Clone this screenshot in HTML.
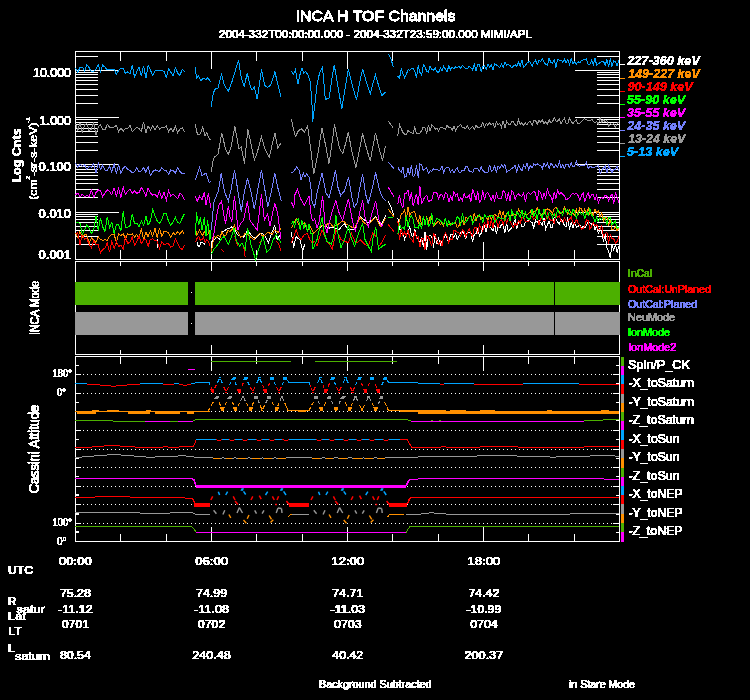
<!DOCTYPE html>
<html lang="en"><head><meta charset="utf-8"><title>INCA H TOF Channels</title>
<style>html,body{margin:0;padding:0;background:#000;overflow:hidden}svg{display:block}text{font-family:"Liberation Sans", sans-serif;white-space:pre}</style></head><body>
<svg width="750" height="700" viewBox="0 0 750 700">
<rect width="750" height="700" fill="#000"/>
<g shape-rendering="crispEdges">
<rect x="75" y="51" width="545" height="1" fill="#ffffff"/>
<rect x="75" y="259" width="545" height="1" fill="#ffffff"/>
<rect x="75" y="51" width="1" height="209" fill="#ffffff"/>
<rect x="619" y="51" width="1" height="209" fill="#ffffff"/>
<rect x="75" y="261" width="545" height="1" fill="#ffffff"/>
<rect x="75" y="354" width="545" height="1" fill="#ffffff"/>
<rect x="75" y="261" width="1" height="94" fill="#ffffff"/>
<rect x="619" y="261" width="1" height="94" fill="#ffffff"/>
<rect x="75" y="356" width="545" height="1" fill="#ffffff"/>
<rect x="75" y="541" width="545" height="1" fill="#ffffff"/>
<rect x="75" y="356" width="1" height="186" fill="#ffffff"/>
<rect x="619" y="356" width="1" height="186" fill="#ffffff"/>
<rect x="120" y="51" width="1" height="10" fill="#ffffff"/>
<rect x="120" y="250" width="1" height="10" fill="#ffffff"/>
<rect x="166" y="51" width="1" height="10" fill="#ffffff"/>
<rect x="166" y="250" width="1" height="10" fill="#ffffff"/>
<rect x="211" y="51" width="1" height="18" fill="#ffffff"/>
<rect x="211" y="242" width="1" height="18" fill="#ffffff"/>
<rect x="256" y="51" width="1" height="10" fill="#ffffff"/>
<rect x="256" y="250" width="1" height="10" fill="#ffffff"/>
<rect x="302" y="51" width="1" height="10" fill="#ffffff"/>
<rect x="302" y="250" width="1" height="10" fill="#ffffff"/>
<rect x="347" y="51" width="1" height="18" fill="#ffffff"/>
<rect x="347" y="242" width="1" height="18" fill="#ffffff"/>
<rect x="392" y="51" width="1" height="10" fill="#ffffff"/>
<rect x="392" y="250" width="1" height="10" fill="#ffffff"/>
<rect x="438" y="51" width="1" height="10" fill="#ffffff"/>
<rect x="438" y="250" width="1" height="10" fill="#ffffff"/>
<rect x="483" y="51" width="1" height="18" fill="#ffffff"/>
<rect x="483" y="242" width="1" height="18" fill="#ffffff"/>
<rect x="528" y="51" width="1" height="10" fill="#ffffff"/>
<rect x="528" y="250" width="1" height="10" fill="#ffffff"/>
<rect x="574" y="51" width="1" height="10" fill="#ffffff"/>
<rect x="574" y="250" width="1" height="10" fill="#ffffff"/>
<rect x="120" y="261" width="1" height="5" fill="#ffffff"/>
<rect x="120" y="350" width="1" height="5" fill="#ffffff"/>
<rect x="166" y="261" width="1" height="5" fill="#ffffff"/>
<rect x="166" y="350" width="1" height="5" fill="#ffffff"/>
<rect x="211" y="261" width="1" height="10" fill="#ffffff"/>
<rect x="211" y="345" width="1" height="10" fill="#ffffff"/>
<rect x="256" y="261" width="1" height="5" fill="#ffffff"/>
<rect x="256" y="350" width="1" height="5" fill="#ffffff"/>
<rect x="302" y="261" width="1" height="5" fill="#ffffff"/>
<rect x="302" y="350" width="1" height="5" fill="#ffffff"/>
<rect x="347" y="261" width="1" height="10" fill="#ffffff"/>
<rect x="347" y="345" width="1" height="10" fill="#ffffff"/>
<rect x="392" y="261" width="1" height="5" fill="#ffffff"/>
<rect x="392" y="350" width="1" height="5" fill="#ffffff"/>
<rect x="438" y="261" width="1" height="5" fill="#ffffff"/>
<rect x="438" y="350" width="1" height="5" fill="#ffffff"/>
<rect x="483" y="261" width="1" height="10" fill="#ffffff"/>
<rect x="483" y="345" width="1" height="10" fill="#ffffff"/>
<rect x="528" y="261" width="1" height="5" fill="#ffffff"/>
<rect x="528" y="350" width="1" height="5" fill="#ffffff"/>
<rect x="574" y="261" width="1" height="5" fill="#ffffff"/>
<rect x="574" y="350" width="1" height="5" fill="#ffffff"/>
<rect x="120" y="356" width="1" height="8" fill="#ffffff"/>
<rect x="120" y="534" width="1" height="8" fill="#ffffff"/>
<rect x="166" y="356" width="1" height="8" fill="#ffffff"/>
<rect x="166" y="534" width="1" height="8" fill="#ffffff"/>
<rect x="211" y="356" width="1" height="15" fill="#ffffff"/>
<rect x="211" y="527" width="1" height="15" fill="#ffffff"/>
<rect x="256" y="356" width="1" height="8" fill="#ffffff"/>
<rect x="256" y="534" width="1" height="8" fill="#ffffff"/>
<rect x="302" y="356" width="1" height="8" fill="#ffffff"/>
<rect x="302" y="534" width="1" height="8" fill="#ffffff"/>
<rect x="347" y="356" width="1" height="15" fill="#ffffff"/>
<rect x="347" y="527" width="1" height="15" fill="#ffffff"/>
<rect x="392" y="356" width="1" height="8" fill="#ffffff"/>
<rect x="392" y="534" width="1" height="8" fill="#ffffff"/>
<rect x="438" y="356" width="1" height="8" fill="#ffffff"/>
<rect x="438" y="534" width="1" height="8" fill="#ffffff"/>
<rect x="483" y="356" width="1" height="15" fill="#ffffff"/>
<rect x="483" y="527" width="1" height="15" fill="#ffffff"/>
<rect x="528" y="356" width="1" height="8" fill="#ffffff"/>
<rect x="528" y="534" width="1" height="8" fill="#ffffff"/>
<rect x="574" y="356" width="1" height="8" fill="#ffffff"/>
<rect x="574" y="534" width="1" height="8" fill="#ffffff"/>
<rect x="75" y="244" width="23" height="1" fill="#ffffff"/>
<rect x="597" y="244" width="23" height="1" fill="#ffffff"/>
<rect x="75" y="236" width="23" height="1" fill="#ffffff"/>
<rect x="597" y="236" width="23" height="1" fill="#ffffff"/>
<rect x="75" y="230" width="23" height="1" fill="#ffffff"/>
<rect x="597" y="230" width="23" height="1" fill="#ffffff"/>
<rect x="75" y="226" width="23" height="1" fill="#ffffff"/>
<rect x="597" y="226" width="23" height="1" fill="#ffffff"/>
<rect x="75" y="222" width="23" height="1" fill="#ffffff"/>
<rect x="597" y="222" width="23" height="1" fill="#ffffff"/>
<rect x="75" y="219" width="23" height="1" fill="#ffffff"/>
<rect x="597" y="219" width="23" height="1" fill="#ffffff"/>
<rect x="75" y="216" width="23" height="1" fill="#ffffff"/>
<rect x="597" y="216" width="23" height="1" fill="#ffffff"/>
<rect x="75" y="214" width="23" height="1" fill="#ffffff"/>
<rect x="597" y="214" width="23" height="1" fill="#ffffff"/>
<rect x="75" y="212" width="44" height="1" fill="#ffffff"/>
<rect x="575" y="212" width="45" height="1" fill="#ffffff"/>
<rect x="75" y="197" width="23" height="1" fill="#ffffff"/>
<rect x="597" y="197" width="23" height="1" fill="#ffffff"/>
<rect x="75" y="189" width="23" height="1" fill="#ffffff"/>
<rect x="597" y="189" width="23" height="1" fill="#ffffff"/>
<rect x="75" y="183" width="23" height="1" fill="#ffffff"/>
<rect x="597" y="183" width="23" height="1" fill="#ffffff"/>
<rect x="75" y="179" width="23" height="1" fill="#ffffff"/>
<rect x="597" y="179" width="23" height="1" fill="#ffffff"/>
<rect x="75" y="175" width="23" height="1" fill="#ffffff"/>
<rect x="597" y="175" width="23" height="1" fill="#ffffff"/>
<rect x="75" y="172" width="23" height="1" fill="#ffffff"/>
<rect x="597" y="172" width="23" height="1" fill="#ffffff"/>
<rect x="75" y="169" width="23" height="1" fill="#ffffff"/>
<rect x="597" y="169" width="23" height="1" fill="#ffffff"/>
<rect x="75" y="166" width="23" height="1" fill="#ffffff"/>
<rect x="597" y="166" width="23" height="1" fill="#ffffff"/>
<rect x="75" y="164" width="44" height="1" fill="#ffffff"/>
<rect x="575" y="164" width="45" height="1" fill="#ffffff"/>
<rect x="75" y="150" width="23" height="1" fill="#ffffff"/>
<rect x="597" y="150" width="23" height="1" fill="#ffffff"/>
<rect x="75" y="142" width="23" height="1" fill="#ffffff"/>
<rect x="597" y="142" width="23" height="1" fill="#ffffff"/>
<rect x="75" y="136" width="23" height="1" fill="#ffffff"/>
<rect x="597" y="136" width="23" height="1" fill="#ffffff"/>
<rect x="75" y="131" width="23" height="1" fill="#ffffff"/>
<rect x="597" y="131" width="23" height="1" fill="#ffffff"/>
<rect x="75" y="128" width="23" height="1" fill="#ffffff"/>
<rect x="597" y="128" width="23" height="1" fill="#ffffff"/>
<rect x="75" y="124" width="23" height="1" fill="#ffffff"/>
<rect x="597" y="124" width="23" height="1" fill="#ffffff"/>
<rect x="75" y="122" width="23" height="1" fill="#ffffff"/>
<rect x="597" y="122" width="23" height="1" fill="#ffffff"/>
<rect x="75" y="119" width="23" height="1" fill="#ffffff"/>
<rect x="597" y="119" width="23" height="1" fill="#ffffff"/>
<rect x="75" y="117" width="44" height="1" fill="#ffffff"/>
<rect x="575" y="117" width="45" height="1" fill="#ffffff"/>
<rect x="75" y="103" width="23" height="1" fill="#ffffff"/>
<rect x="597" y="103" width="23" height="1" fill="#ffffff"/>
<rect x="75" y="95" width="23" height="1" fill="#ffffff"/>
<rect x="597" y="95" width="23" height="1" fill="#ffffff"/>
<rect x="75" y="89" width="23" height="1" fill="#ffffff"/>
<rect x="597" y="89" width="23" height="1" fill="#ffffff"/>
<rect x="75" y="84" width="23" height="1" fill="#ffffff"/>
<rect x="597" y="84" width="23" height="1" fill="#ffffff"/>
<rect x="75" y="80" width="23" height="1" fill="#ffffff"/>
<rect x="597" y="80" width="23" height="1" fill="#ffffff"/>
<rect x="75" y="77" width="23" height="1" fill="#ffffff"/>
<rect x="597" y="77" width="23" height="1" fill="#ffffff"/>
<rect x="75" y="74" width="23" height="1" fill="#ffffff"/>
<rect x="597" y="74" width="23" height="1" fill="#ffffff"/>
<rect x="75" y="72" width="23" height="1" fill="#ffffff"/>
<rect x="597" y="72" width="23" height="1" fill="#ffffff"/>
<rect x="75" y="70" width="44" height="1" fill="#ffffff"/>
<rect x="575" y="70" width="45" height="1" fill="#ffffff"/>
<rect x="75" y="56" width="23" height="1" fill="#ffffff"/>
<rect x="597" y="56" width="23" height="1" fill="#ffffff"/>
<rect x="75" y="365" width="4" height="1" fill="#ffffff"/>
<rect x="75" y="383" width="4" height="1" fill="#ffffff"/>
<rect x="75" y="402" width="4" height="1" fill="#ffffff"/>
<rect x="75" y="420" width="4" height="1" fill="#ffffff"/>
<rect x="75" y="439" width="4" height="1" fill="#ffffff"/>
<rect x="75" y="457" width="4" height="1" fill="#ffffff"/>
<rect x="75" y="476" width="4" height="1" fill="#ffffff"/>
<rect x="75" y="494" width="4" height="1" fill="#ffffff"/>
<rect x="75" y="513" width="4" height="1" fill="#ffffff"/>
<rect x="75" y="531" width="4" height="1" fill="#ffffff"/>
</g>
<g>
<polyline points="157.0,238.5 157.8,247.5" fill="none" stroke="#ffffff" stroke-width="1" shape-rendering="crispEdges"/>
<polyline points="197.2,242.0 198.3,246.8 199.6,246.0 201.2,242.0 202.8,242.8 204.4,244.4 206.0,241.2" fill="none" stroke="#ffffff" stroke-width="1" shape-rendering="crispEdges"/>
<polyline points="211.3,258.8 211.3,242.0 214.0,239.6 217.2,237.2 219.6,239.6 222.0,231.6 224.4,230.8 226.8,229.2 229.2,228.4 231.9,226.8 234.8,229.2 236.4,233.2 238.0,234.8 240.9,236.4 243.6,237.2 245.7,233.2 247.6,230.0 249.2,232.4 250.8,234.8 253.2,237.2 255.6,238.8 258.0,235.6 260.4,233.2 262.8,234.0 265.2,236.4 266.8,239.6 268.4,242.8 270.0,238.0 271.6,233.2 273.2,229.2 274.8,225.2 276.1,233.2 277.2,239.6 279.0,236.4 280.9,234.0" fill="none" stroke="#ffffff" stroke-width="1" shape-rendering="crispEdges"/>
<polyline points="291.4,232.4 292.7,241.2 293.8,247.6 294.9,241.2 296.2,236.4 298.1,238.8 300.2,239.6 301.5,246.0 302.6,250.8 303.9,246.8 305.0,244.4" fill="none" stroke="#ffffff" stroke-width="1" shape-rendering="crispEdges"/>
<polyline points="319.4,228.4 322.1,225.2 324.7,226.5 326.9,226.8 329.8,228.1 333.0,227.6 336.2,228.7 339.4,229.2 341.8,226.0 344.5,223.6 346.6,227.6 349.0,230.0 352.2,229.7 355.4,228.4 357.8,222.0 360.2,216.4 362.6,218.8 365.0,220.4 368.2,222.8 372.2,219.6 375.7,216.4 378.6,222.0 381.0,225.2 383.4,220.4 385.8,215.6" fill="none" stroke="#ffffff" stroke-width="1" shape-rendering="crispEdges"/>
<polyline points="388.2,201.2 390.6,206.0 393.8,215.6" fill="none" stroke="#ffffff" stroke-width="1" shape-rendering="crispEdges"/>
<polyline points="397.8,217.8 399.5,227.7 401.2,233.7 402.9,232.4 404.6,239.2 406.3,235.0 408.0,231.7 409.7,226.7 411.4,235.2 413.1,237.0 414.8,229.3 416.5,237.3 418.2,239.4 419.9,242.5 421.6,237.1 423.3,247.1 425.0,232.2 426.7,249.5 428.4,236.4 430.1,235.1 431.8,236.5 433.5,247.6 435.2,233.8 436.9,243.9 438.6,238.2 440.3,244.9 442.0,241.6 443.7,239.1 445.4,234.7 447.1,237.6 448.8,243.1 450.5,234.5 452.2,234.8 453.9,237.3 455.6,233.8 457.3,239.6 459.0,235.8 460.7,232.8 462.4,231.3 464.1,234.4 465.8,238.4 467.5,231.5 469.2,232.8 470.9,232.3 472.6,241.8 474.3,234.2 476.0,233.8 477.7,229.1 479.4,235.8 481.1,233.3 482.8,226.9 484.5,225.9 486.2,232.4 487.9,222.3 489.6,226.2 491.3,228.7 493.0,231.0 494.7,224.7 496.4,234.1 498.1,226.4 499.8,227.8 501.5,224.6 503.2,225.1 504.9,232.8 506.6,222.3 508.3,231.9 510.0,229.3 511.7,228.3 513.4,223.7 515.1,219.4 516.8,229.1 518.5,221.9 520.2,221.4 521.9,227.0 523.6,226.6 525.3,222.6 527.0,221.5 528.7,220.2 530.4,221.3 532.1,222.6 533.8,228.1 535.5,220.2 537.2,222.6 538.9,220.3 540.6,222.5 542.3,225.2 544.0,217.8 545.7,229.1 547.4,224.7 549.1,221.1 550.8,227.1 552.5,227.4 554.2,217.0 555.9,218.9 557.6,222.0 559.3,224.1 561.0,219.8 562.7,220.5 564.4,225.7 566.1,226.2 567.8,216.9 569.5,229.7 571.2,221.8 572.9,227.8 574.6,222.8 576.3,227.1 578.0,226.4 579.7,224.9 581.4,228.2 583.1,226.6 584.8,227.8 586.5,225.6 588.2,221.4 589.9,222.8 591.6,224.0 593.3,223.7 595.0,229.4 596.7,226.3 598.4,234.2 600.1,227.8 601.8,232.6 603.5,241.7 605.2,234.0 606.9,247.7 608.6,251.3 610.3,257.7 612.0,245.2 613.7,250.1 615.4,244.4 617.1,252.5 618.8,245.9" fill="none" stroke="#ffffff" stroke-width="1" shape-rendering="crispEdges"/>
<polyline points="75.5,233.1 77.8,237.1 80.0,231.6 82.3,237.3 84.6,234.9 86.8,235.0 89.1,243.4 91.4,237.9 93.7,240.0 95.9,242.6 98.2,236.8 100.5,239.6 102.7,240.4 105.0,239.6 107.3,240.3 109.5,236.4 111.8,234.3 114.1,234.4 116.4,242.1 118.6,233.5 120.9,235.7 123.2,233.6 125.4,238.7 127.7,233.9 130.0,235.0 132.2,233.9 134.5,236.9 136.8,234.4 139.1,238.4 141.3,228.5 143.6,240.0 145.9,232.3 148.1,236.9 150.4,230.6 152.7,236.4 155.0,228.3 157.2,237.9 159.5,227.9 161.8,236.5 164.0,231.4 166.3,231.7 168.6,233.1 170.8,237.3 173.1,232.7 175.4,234.7 177.7,231.5 179.9,234.3 182.2,230.8 184.5,234.5" fill="none" stroke="#ff9000" stroke-width="1" shape-rendering="crispEdges"/>
<polyline points="195.6,228.4 196.7,234.8 198.0,233.2 199.6,230.0 201.2,233.2 202.8,235.6 204.4,231.6 206.0,234.0 207.6,234.8 209.2,230.8 210.8,233.2" fill="none" stroke="#ff9000" stroke-width="1" shape-rendering="crispEdges"/>
<polyline points="211.3,252.4 214.0,236.4 215.9,238.0 218.0,234.8 220.1,237.2 222.0,231.6 223.9,236.4 226.0,234.8 228.1,230.0 230.0,231.6 232.2,229.2 234.5,225.2 236.4,230.8 238.0,231.6 240.4,237.2 242.8,236.4 245.2,233.2 247.6,234.8 250.8,237.2 254.0,239.6 257.2,235.6 260.4,233.2 262.8,236.4 265.2,234.8 267.6,232.4 270.0,233.2 272.4,234.0 274.8,230.0 278.0,232.4 280.9,228.4" fill="none" stroke="#ff9000" stroke-width="1" shape-rendering="crispEdges"/>
<polyline points="291.4,228.4 293.8,222.8 296.2,218.8 298.6,224.4 301.0,225.2 304.2,222.8 307.4,230.0 310.6,226.8 313.8,233.2 317.0,230.0 319.4,227.6 322.1,225.2 324.7,226.8 326.9,224.4 329.8,222.8 333.0,226.8 336.2,225.2 339.4,223.6 341.8,221.2 344.5,222.0 346.6,224.4 349.0,225.2 352.2,227.6 355.4,226.8 357.8,222.0 360.2,217.2 362.6,221.2 365.0,223.6 368.2,225.2 372.2,220.4 375.7,217.2 378.6,223.6 381.0,226.8 383.4,222.0 385.8,218.0" fill="none" stroke="#ff9000" stroke-width="1" shape-rendering="crispEdges"/>
<polyline points="388.2,209.2 393.8,216.4" fill="none" stroke="#ff9000" stroke-width="1" shape-rendering="crispEdges"/>
<polyline points="397.8,222.7 399.5,221.4 401.2,213.9 402.9,213.1 404.6,209.8 406.3,220.5 408.0,207.1 409.7,215.7 411.4,212.6 413.1,211.8 414.8,211.8 416.5,218.7 418.2,222.8 419.9,215.6 421.6,225.1 423.3,216.4 425.0,223.5 426.7,217.0 428.4,223.0 430.1,216.3 431.8,218.9 433.5,226.4 435.2,224.5 436.9,222.6 438.6,221.3 440.3,224.9 442.0,222.5 443.7,225.9 445.4,217.8 447.1,225.7 448.8,224.4 450.5,223.7 452.2,225.0 453.9,222.9 455.6,222.2 457.3,227.9 459.0,225.5 460.7,222.3 462.4,220.5 464.1,224.7 465.8,217.7 467.5,218.2 469.2,216.8 470.9,215.3 472.6,221.2 474.3,213.0 476.0,221.1 477.7,215.3 479.4,215.7 481.1,220.1 482.8,217.6 484.5,216.8 486.2,217.0 487.9,220.2 489.6,215.9 491.3,219.2 493.0,215.5 494.7,214.4 496.4,215.8 498.1,216.8 499.8,210.7 501.5,217.2 503.2,210.9 504.9,218.7 506.6,213.7 508.3,214.1 510.0,216.6 511.7,215.6 513.4,214.5 515.1,214.2 516.8,215.2 518.5,208.9 520.2,212.1 521.9,213.2 523.6,213.8 525.3,214.8 527.0,214.9 528.7,213.3 530.4,211.3 532.1,214.5 533.8,211.4 535.5,211.5 537.2,208.0 538.9,212.2 540.6,215.0 542.3,213.8 544.0,214.3 545.7,209.9 547.4,208.9 549.1,209.8 550.8,211.3 552.5,213.9 554.2,208.3 555.9,207.5 557.6,209.9 559.3,211.6 561.0,213.5 562.7,211.7 564.4,207.1 566.1,209.8 567.8,214.0 569.5,210.0 571.2,213.7 572.9,213.1 574.6,215.6 576.3,209.4 578.0,214.6 579.7,207.7 581.4,209.0 583.1,213.1 584.8,208.8 586.5,215.2 588.2,208.2 589.9,214.4 591.6,212.3 593.3,214.8 595.0,209.1 596.7,213.1 598.4,210.7 600.1,217.1 601.8,212.7 603.5,220.7 605.2,218.0 606.9,217.0 608.6,225.5 610.3,218.7 612.0,229.7 613.7,229.1 615.4,226.8 617.1,230.6 618.8,228.5" fill="none" stroke="#ff9000" stroke-width="1" shape-rendering="crispEdges"/>
<polyline points="75.5,234.2 77.8,232.8 80.0,244.8 82.3,234.2 84.6,239.0 86.8,238.1 89.1,244.4 91.4,247.7 93.7,241.0 95.9,244.2 98.2,244.9 100.5,252.7 102.7,249.6 105.0,248.0 107.3,242.9 109.5,252.3 111.8,241.4 114.1,248.7 116.4,241.4 118.6,246.7 120.9,245.2 123.2,249.0 125.4,237.2 127.7,243.4 130.0,242.2 132.2,237.2 134.5,245.1 136.8,241.9 139.1,235.6 141.3,243.7 143.6,239.9 145.9,239.4 148.1,246.5 150.4,239.1 152.7,239.0 155.0,240.6 157.2,241.1 159.5,248.2 161.8,241.4 164.0,244.8 166.3,243.7 168.6,243.8 170.8,247.1 173.1,246.1 175.4,239.2 177.7,243.4 179.9,247.7 182.2,249.4 184.5,244.7" fill="none" stroke="#ff0000" stroke-width="1" shape-rendering="crispEdges"/>
<polyline points="195.6,242.0 197.2,238.0 198.8,236.4 200.4,240.4 202.0,239.6 203.6,237.2 205.2,242.8 206.8,239.6 208.4,241.2 210.0,246.0" fill="none" stroke="#ff0000" stroke-width="1" shape-rendering="crispEdges"/>
<polyline points="221.2,249.2 224.4,252.4" fill="none" stroke="#ff0000" stroke-width="1" shape-rendering="crispEdges"/>
<polyline points="234.8,236.4 236.4,242.0 238.0,246.0" fill="none" stroke="#ff0000" stroke-width="1" shape-rendering="crispEdges"/>
<polyline points="243.6,246.0 244.4,252.4 245.2,257.2" fill="none" stroke="#ff0000" stroke-width="1" shape-rendering="crispEdges"/>
<polyline points="258.8,242.8 260.4,242.0 262.0,239.6" fill="none" stroke="#ff0000" stroke-width="1" shape-rendering="crispEdges"/>
<polyline points="276.4,241.2 278.8,244.4 280.9,250.8" fill="none" stroke="#ff0000" stroke-width="1" shape-rendering="crispEdges"/>
<polyline points="291.4,242.8 293.8,236.4 296.2,230.0 298.6,236.4 301.0,239.6 304.2,234.8 307.4,233.2 309.8,239.6 312.2,242.8 314.6,241.2 317.0,246.0 319.4,238.0 322.1,230.0 324.7,236.4 326.9,241.2 329.8,244.4 332.2,249.2 334.3,239.6 335.9,230.0 338.6,234.8 341.0,239.6 344.5,241.2 348.5,242.8 351.4,233.2 353.5,238.0 355.4,242.8 357.8,242.0 360.2,239.6 362.6,242.0 365.0,244.4 368.2,246.0 370.6,239.6 372.7,233.2 375.7,236.4" fill="none" stroke="#ff0000" stroke-width="1" shape-rendering="crispEdges"/>
<polyline points="379.4,246.0 382.6,241.2 385.8,234.8" fill="none" stroke="#ff0000" stroke-width="1" shape-rendering="crispEdges"/>
<polyline points="388.2,224.4 393.8,231.6" fill="none" stroke="#ff0000" stroke-width="1" shape-rendering="crispEdges"/>
<polyline points="397.8,221.0 399.5,240.3 401.2,228.9 402.9,235.6 404.6,232.4 406.3,235.7 408.0,230.1 409.7,237.5 411.4,239.3 413.1,242.1 414.8,231.4 416.5,238.3 418.2,237.2 419.9,247.3 421.6,238.6 423.3,238.7 425.0,249.5 426.7,235.6 428.4,237.0 430.1,241.2 431.8,245.7 433.5,234.1 435.2,235.9 436.9,240.5 438.6,244.2 440.3,241.2 442.0,245.6 443.7,236.3 445.4,233.2 447.1,236.2 448.8,242.6 450.5,239.0 452.2,239.8 453.9,230.6 455.6,231.0 457.3,232.5 459.0,233.1 460.7,236.5 462.4,229.3 464.1,231.6 465.8,237.0 467.5,232.4 469.2,228.8 470.9,234.0 472.6,236.4 474.3,227.8 476.0,227.3 477.7,234.2 479.4,224.4 481.1,228.2 482.8,231.3 484.5,221.7 486.2,228.1 487.9,220.4 489.6,228.0 491.3,219.7 493.0,227.6 494.7,217.8 496.4,220.8 498.1,227.4 499.8,221.5 501.5,219.0 503.2,224.9 504.9,218.8 506.6,222.7 508.3,218.2 510.0,220.6 511.7,224.1 513.4,227.1 515.1,223.3 516.8,225.4 518.5,221.1 520.2,223.0 521.9,217.8 523.6,217.2 525.3,221.8 527.0,221.2 528.7,221.9 530.4,217.5 532.1,216.3 533.8,219.6 535.5,217.1 537.2,215.9 538.9,224.9 540.6,218.5 542.3,218.9 544.0,220.9 545.7,220.8 547.4,213.2 549.1,218.1 550.8,220.5 552.5,219.9 554.2,223.0 555.9,214.9 557.6,217.3 559.3,215.8 561.0,220.5 562.7,222.9 564.4,217.7 566.1,221.4 567.8,221.1 569.5,219.0 571.2,217.0 572.9,222.9 574.6,224.6 576.3,218.8 578.0,222.7 579.7,225.3 581.4,229.3 583.1,228.3 584.8,225.3 586.5,220.0 588.2,220.8 589.9,229.4 591.6,226.3 593.3,222.4 595.0,226.0 596.7,224.5 598.4,230.0 600.1,229.5 601.8,225.5 603.5,237.0 605.2,233.4 606.9,232.3 608.6,243.8 610.3,234.4 612.0,238.9 613.7,238.7 615.4,243.4 617.1,241.5 618.8,236.3" fill="none" stroke="#ff0000" stroke-width="1" shape-rendering="crispEdges"/>
<polyline points="75.5,221.7 77.8,222.5 80.0,223.2 82.3,234.5 84.6,229.6 86.8,225.0 89.1,227.9 91.4,233.4 93.7,230.4 95.9,215.8 98.2,230.6 100.5,217.8 102.7,227.0 105.0,231.5 107.3,216.6 109.5,227.8 111.8,222.3 114.1,233.4 116.4,224.8 118.6,224.8 120.9,230.9 123.2,210.9 125.4,227.0 127.7,227.5 130.0,225.6 132.2,213.7 134.5,223.6 136.8,223.3 139.1,226.5 141.3,220.9 143.6,225.5 145.9,215.9 148.1,225.1 150.4,220.8 152.7,209.4 155.0,216.1 157.2,221.0 159.5,223.2 161.8,220.0 164.0,212.9 166.3,213.8 168.6,221.5 170.8,225.1 173.1,222.0 175.4,217.3 177.7,222.9 179.9,223.1 182.2,218.2 184.5,213.6" fill="none" stroke="#00ff00" stroke-width="1" shape-rendering="crispEdges"/>
<polyline points="195.6,234.8 196.4,212.4 198.8,225.2 200.4,217.2 202.0,230.0 204.4,217.2 206.0,236.4 207.6,220.4 210.0,239.6 211.0,230.0" fill="none" stroke="#00ff00" stroke-width="1" shape-rendering="crispEdges"/>
<polyline points="211.3,254.0 214.0,249.2 218.0,244.4 222.0,238.0 224.4,236.4 228.4,244.4 231.6,236.4 234.0,228.4 236.4,241.2 239.6,246.0 242.0,242.8 245.2,249.2 247.6,228.4 250.8,244.4 255.6,259.6 259.6,246.0 262.8,236.4 266.8,252.4 270.0,249.2 273.2,239.6 276.4,234.8 280.9,242.8" fill="none" stroke="#00ff00" stroke-width="1" shape-rendering="crispEdges"/>
<polyline points="291.4,223.6 293.0,221.2 294.6,226.8 296.5,219.6 298.6,218.8 300.2,230.0 301.8,220.4 303.9,228.4 305.5,222.8 307.4,231.6 309.0,223.6 310.6,233.2 312.2,233.2 313.0,249.2 317.0,239.6 322.1,217.2 324.2,233.2 326.9,241.2 331.4,244.4 333.8,236.4 335.9,214.8 337.8,233.2 341.0,247.6 344.5,239.6 348.5,225.2 350.6,236.4 354.6,246.0 358.6,233.2 362.6,223.6 365.0,239.6 368.2,246.0 371.4,251.6 372.7,239.6 375.7,226.8 378.6,249.2 382.6,246.0 385.8,244.4" fill="none" stroke="#00ff00" stroke-width="1" shape-rendering="crispEdges"/>
<polyline points="388.2,217.5 393.0,217.5" fill="none" stroke="#00ff00" stroke-width="1" shape-rendering="crispEdges"/>
<polyline points="397.8,234.1 399.5,222.9 401.2,229.0 402.9,227.4 404.6,229.1 406.3,215.0 408.0,226.6 409.7,218.3 411.4,215.8 413.1,219.1 414.8,227.5 416.5,227.2 418.2,227.9 419.9,222.8 421.6,228.6 423.3,216.4 425.0,224.7 426.7,216.9 428.4,226.7 430.1,224.0 431.8,213.5 433.5,226.3 435.2,221.2 436.9,218.4 438.6,219.1 440.3,220.9 442.0,221.7 443.7,224.7 445.4,217.8 447.1,226.4 448.8,220.4 450.5,225.2 452.2,222.8 453.9,223.9 455.6,221.2 457.3,216.9 459.0,218.3 460.7,225.7 462.4,213.1 464.1,222.3 465.8,222.6 467.5,219.8 469.2,216.5 470.9,215.9 472.6,223.6 474.3,220.8 476.0,217.3 477.7,217.1 479.4,215.1 481.1,217.2 482.8,223.1 484.5,214.5 486.2,217.3 487.9,216.3 489.6,217.0 491.3,215.2 493.0,216.4 494.7,222.3 496.4,219.5 498.1,217.4 499.8,217.9 501.5,218.7 503.2,218.0 504.9,220.7 506.6,215.1 508.3,212.0 510.0,221.1 511.7,210.3 513.4,214.4 515.1,219.1 516.8,212.0 518.5,214.3 520.2,217.4 521.9,210.0 523.6,219.1 525.3,211.6 527.0,217.4 528.7,219.4 530.4,218.6 532.1,208.8 533.8,216.4 535.5,211.3 537.2,219.5 538.9,209.2 540.6,214.3 542.3,218.7 544.0,208.6 545.7,213.9 547.4,217.9 549.1,212.5 550.8,213.5 552.5,217.4 554.2,213.8 555.9,217.7 557.6,209.7 559.3,213.4 561.0,212.5 562.7,215.1 564.4,209.0 566.1,212.3 567.8,209.1 569.5,214.1 571.2,215.2 572.9,209.6 574.6,211.2 576.3,217.8 578.0,213.7 579.7,211.3 581.4,214.8 583.1,212.8 584.8,219.2 586.5,211.6 588.2,214.9 589.9,208.8 591.6,214.9 593.3,217.4 595.0,221.6 596.7,217.1 598.4,221.5 600.1,218.1 601.8,219.4 603.5,217.6 605.2,218.2 606.9,224.3 608.6,217.6 610.3,217.1 612.0,224.5 613.7,222.7 615.4,221.0 617.1,228.6 618.8,226.9" fill="none" stroke="#00ff00" stroke-width="1" shape-rendering="crispEdges"/>
<polyline points="75.5,194.6 77.8,193.1 80.0,196.8 82.3,194.4 84.6,196.7 86.8,195.6 89.1,196.3 91.4,190.0 93.7,197.4 95.9,192.8 98.2,189.9 100.5,190.8 102.7,196.8 105.0,192.8 107.3,189.8 109.5,191.2 111.8,195.0 114.1,187.9 116.4,196.0 118.6,188.3 120.9,197.4 123.2,187.1 125.4,194.3 127.7,191.3 130.0,188.9 132.2,193.6 134.5,190.9 136.8,193.1 139.1,192.8 141.3,187.3 143.6,191.0 145.9,196.4 148.1,187.9 150.4,192.8 152.7,195.1 155.0,194.0 157.2,197.0 159.5,191.0 161.8,198.4 164.0,192.4 166.3,200.3 168.6,190.6 170.8,196.4 173.1,194.3 175.4,196.2 177.7,198.6 179.9,193.4 182.2,194.9 184.5,200.4" fill="none" stroke="#ff00ff" stroke-width="1" shape-rendering="crispEdges"/>
<polyline points="195.6,196.4 197.2,201.2 199.6,196.4 202.0,199.6 204.4,192.4 206.0,205.2 208.4,193.2 210.8,207.6" fill="none" stroke="#ff00ff" stroke-width="1" shape-rendering="crispEdges"/>
<polyline points="212.4,239.6 214.0,233.2 216.4,217.2 218.8,205.2 221.5,201.2 223.6,214.0 225.5,223.6 228.4,206.0 230.0,217.2 231.9,221.2 234.5,195.6 236.4,214.0 238.0,230.0 240.4,223.6 243.6,220.4 247.3,201.2 250.0,220.4 254.0,226.0 257.2,230.0 261.5,194.0 264.4,220.4 267.6,214.0 270.0,226.0 274.8,202.8 277.7,214.0 280.9,238.8" fill="none" stroke="#ff00ff" stroke-width="1" shape-rendering="crispEdges"/>
<polyline points="291.4,202.0 293.8,207.6 294.9,194.8 297.5,189.2 300.2,198.0 304.2,205.2 309.0,196.4 311.4,217.2 313.0,221.2 314.6,218.8 317.0,228.4 319.4,220.4 322.6,195.6 325.0,223.6 326.9,233.2 331.4,214.0 335.9,200.4 339.4,214.0 342.6,220.4 345.0,210.8 348.5,198.8 351.4,215.6 354.1,228.4 355.4,230.8 359.4,214.0 362.6,200.4 365.0,217.2 368.2,226.8 372.2,212.4 375.7,201.2 378.6,218.8 381.8,226.8 383.4,223.6" fill="none" stroke="#ff00ff" stroke-width="1" shape-rendering="crispEdges"/>
<polyline points="388.2,187.1 393.8,196.4" fill="none" stroke="#ff00ff" stroke-width="1" shape-rendering="crispEdges"/>
<polyline points="397.8,203.7 399.5,194.8 401.2,204.0 402.9,207.5 404.6,194.0 406.3,193.2 408.0,189.8 409.7,200.9 411.4,191.6 413.1,205.6 414.8,200.1 416.5,193.7 418.2,204.8 419.9,185.7 421.6,204.4 423.3,199.9 425.0,196.8 426.7,195.2 428.4,201.6 430.1,200.6 431.8,199.9 433.5,192.9 435.2,192.6 436.9,193.1 438.6,198.9 440.3,194.9 442.0,194.6 443.7,198.7 445.4,192.9 447.1,193.9 448.8,202.3 450.5,196.1 452.2,200.3 453.9,191.6 455.6,195.7 457.3,193.8 459.0,201.1 460.7,197.3 462.4,200.7 464.1,193.2 465.8,197.8 467.5,197.1 469.2,195.3 470.9,201.9 472.6,189.0 474.3,193.9 476.0,200.0 477.7,191.1 479.4,202.6 481.1,200.1 482.8,190.5 484.5,199.4 486.2,193.3 487.9,192.9 489.6,196.5 491.3,200.2 493.0,195.5 494.7,200.7 496.4,193.3 498.1,198.0 499.8,198.6 501.5,198.6 503.2,190.5 504.9,192.3 506.6,200.9 508.3,192.2 510.0,200.9 511.7,190.9 513.4,192.7 515.1,199.6 516.8,195.1 518.5,193.8 520.2,195.7 521.9,196.5 523.6,192.8 525.3,201.8 527.0,194.2 528.7,192.3 530.4,194.8 532.1,193.0 533.8,191.5 535.5,193.2 537.2,201.1 538.9,191.0 540.6,192.5 542.3,199.6 544.0,193.1 545.7,197.7 547.4,189.2 549.1,194.2 550.8,196.5 552.5,201.3 554.2,191.9 555.9,198.6 557.6,190.4 559.3,194.5 561.0,192.0 562.7,194.6 564.4,195.6 566.1,199.9 567.8,198.8 569.5,197.9 571.2,194.4 572.9,193.8 574.6,194.3 576.3,193.1 578.0,195.4 579.7,200.4 581.4,195.6 583.1,192.8 584.8,202.2 586.5,196.3 588.2,192.8 589.9,198.5 591.6,194.2 593.3,194.6 595.0,200.1 596.7,195.3 598.4,203.1 600.1,198.4 601.8,197.5 603.5,198.8 605.2,195.2 606.9,196.3 608.6,200.6 610.3,196.0 612.0,194.4 613.7,204.4 615.4,192.7 617.1,197.1 618.8,202.6" fill="none" stroke="#ff00ff" stroke-width="1" shape-rendering="crispEdges"/>
<polyline points="75.5,163.0 77.8,167.6 80.0,163.7 82.3,166.5 84.6,164.7 86.8,169.5 89.1,166.4 91.4,167.2 93.7,163.2 95.9,173.0 98.2,162.9 100.5,169.4 102.7,165.2 105.0,170.2 107.3,170.6 109.5,166.2 111.8,172.1 114.1,163.5 116.4,174.1 118.6,164.3 120.9,173.0 123.2,168.2 125.4,166.4 127.7,169.6 130.0,170.4 132.2,172.5 134.5,171.9 136.8,167.3 139.1,172.1 141.3,170.9 143.6,167.5 145.9,172.3 148.1,166.4 150.4,175.4 152.7,171.7 155.0,169.8 157.2,170.9 159.5,171.4 161.8,167.9 164.0,170.0 166.3,170.7 168.6,174.2 170.8,170.0 173.1,170.7 175.4,172.9 177.7,167.7 179.9,171.2 182.2,173.6 184.5,173.0" fill="none" stroke="#7480fc" stroke-width="1" shape-rendering="crispEdges"/>
<polyline points="195.6,179.6 199.6,167.6 202.0,175.6 206.0,173.2 209.2,182.8 210.8,181.2" fill="none" stroke="#7480fc" stroke-width="1" shape-rendering="crispEdges"/>
<polyline points="211.3,230.0 213.7,202.8 216.4,195.6 218.5,190.8 221.2,173.2 224.4,191.6 228.4,201.2 231.3,188.4 234.5,170.0 238.0,191.6 241.2,211.6 244.4,191.6 247.6,178.0 251.6,194.8 254.3,209.2 258.0,188.4 261.5,170.0 265.2,191.6 267.9,206.8 271.6,190.0 274.8,173.2 278.0,188.4 281.2,200.9" fill="none" stroke="#7480fc" stroke-width="1" shape-rendering="crispEdges"/>
<polyline points="291.4,172.4 293.8,171.6 296.5,166.8 299.4,170.8 301.0,179.6 303.4,173.2 305.0,177.2 306.6,174.0 309.0,177.2 310.6,184.4 312.2,202.8 314.6,206.8 317.0,193.2 322.1,173.2 325.8,192.4 329.0,198.0 333.0,182.0 335.4,170.0 337.8,186.8 340.7,195.6 344.5,190.8 348.5,177.2 351.4,194.8 354.1,207.6 357.0,202.8 362.6,174.0 365.8,194.8 368.2,203.6 372.2,188.4 375.7,172.4 379.4,190.0 382.6,197.2 385.8,201.2" fill="none" stroke="#7480fc" stroke-width="1" shape-rendering="crispEdges"/>
<polyline points="388.2,162.0 393.8,168.4" fill="none" stroke="#7480fc" stroke-width="1" shape-rendering="crispEdges"/>
<polyline points="397.8,166.8 399.5,170.7 401.2,172.3 402.9,166.9 404.6,177.1 406.3,176.1 408.0,168.4 409.7,175.3 411.4,164.9 413.1,176.7 414.8,175.5 416.5,165.5 418.2,177.7 419.9,163.9 421.6,164.9 423.3,170.4 425.0,168.8 426.7,167.7 428.4,173.5 430.1,170.7 431.8,171.3 433.5,168.8 435.2,169.9 436.9,169.6 438.6,170.3 440.3,169.9 442.0,165.7 443.7,173.0 445.4,168.2 447.1,167.1 448.8,167.0 450.5,172.1 452.2,169.6 453.9,172.8 455.6,169.6 457.3,167.9 459.0,172.0 460.7,172.1 462.4,170.1 464.1,170.8 465.8,166.7 467.5,166.7 469.2,170.9 470.9,171.4 472.6,172.7 474.3,168.4 476.0,168.3 477.7,168.1 479.4,171.3 481.1,166.8 482.8,170.4 484.5,172.1 486.2,172.3 487.9,172.1 489.6,164.7 491.3,171.5 493.0,170.4 494.7,165.6 496.4,172.8 498.1,165.8 499.8,168.7 501.5,164.7 503.2,167.3 504.9,164.3 506.6,171.9 508.3,170.9 510.0,170.3 511.7,168.2 513.4,167.8 515.1,165.4 516.8,171.8 518.5,165.4 520.2,168.0 521.9,171.0 523.6,165.1 525.3,167.8 527.0,163.4 528.7,169.5 530.4,165.6 532.1,168.2 533.8,163.8 535.5,165.1 537.2,163.9 538.9,165.0 540.6,165.4 542.3,168.9 544.0,163.2 545.7,166.6 547.4,163.2 549.1,168.5 550.8,163.5 552.5,164.7 554.2,167.9 555.9,164.6 557.6,167.6 559.3,161.6 561.0,168.0 562.7,165.0 564.4,168.3 566.1,164.0 567.8,164.2 569.5,167.3 571.2,162.7 572.9,167.0 574.6,166.6 576.3,160.8 578.0,165.9 579.7,166.1 581.4,165.3 583.1,165.7 584.8,165.3 586.5,162.0 588.2,168.7 589.9,166.2 591.6,167.0 593.3,167.9 595.0,166.9 596.7,166.3 598.4,165.3 600.1,173.7 601.8,170.5 603.5,167.9 605.2,166.0 606.9,173.3 608.6,165.5 610.3,169.2 612.0,172.5 613.7,169.2 615.4,169.2 617.1,165.9 618.8,171.1" fill="none" stroke="#7480fc" stroke-width="1" shape-rendering="crispEdges"/>
<polyline points="75.5,123.8 77.8,130.5 80.0,122.8 82.3,132.9 84.6,124.8 86.8,123.6 89.1,130.8 91.4,129.0 93.7,122.7 95.9,135.3 98.2,126.9 100.5,125.0 102.7,129.1 105.0,130.1 107.3,124.3 109.5,127.1 111.8,127.9 114.1,126.8 116.4,125.4 118.6,131.7 120.9,128.0 123.2,131.2 125.4,128.2 127.7,128.6 130.0,125.4 132.2,131.7 134.5,129.2 136.8,127.1 139.1,128.5 141.3,131.4 143.6,122.0 145.9,132.9 148.1,126.0 150.4,129.9 152.7,125.8 155.0,130.1 157.2,125.5 159.5,129.0 161.8,127.2 164.0,127.9 166.3,126.0 168.6,131.7 170.8,128.3 173.1,131.5 175.4,126.6 177.7,132.8 179.9,129.2 182.2,127.7 184.5,131.8" fill="none" stroke="#999999" stroke-width="1" shape-rendering="crispEdges"/>
<polyline points="195.2,124.2 197.5,134.8 200.3,133.9 202.7,127.3 204.9,135.7 206.8,132.9 208.7,137.6 210.5,140.4" fill="none" stroke="#999999" stroke-width="1" shape-rendering="crispEdges"/>
<polyline points="211.1,172.1 212.8,161.9 214.3,157.2 218.0,154.4 221.7,132.9 225.5,148.8 228.3,154.4 231.1,146.9 234.8,126.4 237.6,141.3 238.9,148.8 241.3,146.9 244.5,163.7 247.9,129.2 251.6,146.9 254.4,160.0 257.2,152.5 261.5,136.7 264.7,148.8 269.3,157.2 274.9,132.9 277.7,147.9 280.9,143.2" fill="none" stroke="#999999" stroke-width="1" shape-rendering="crispEdges"/>
<polyline points="291.4,118.9 293.3,128.0 295.4,136.6 298.5,130.5 301.5,129.0 304.6,132.0 307.6,125.9 310.7,148.8 313.7,173.9 317.7,154.9 322.0,128.0 326.0,147.3 329.0,163.5 332.1,142.7 334.5,124.4 337.3,138.1 339.7,148.8 342.8,153.4 345.8,142.7 348.3,132.0 351.9,151.9 355.9,167.8 359.3,150.4 362.6,133.5 366.6,148.8 370.3,161.0 373.0,145.8 375.5,132.9 378.8,147.3 382.5,160.4 385.5,145.8" fill="none" stroke="#999999" stroke-width="1" shape-rendering="crispEdges"/>
<polyline points="388.6,121.3 393.2,128.0" fill="none" stroke="#999999" stroke-width="1" shape-rendering="crispEdges"/>
<polyline points="397.8,135.8 399.5,124.6 401.2,128.5 402.9,132.6 404.6,134.1 406.3,134.4 408.0,130.5 409.7,132.0 411.4,132.8 413.1,133.2 414.8,127.3 416.5,133.7 418.2,133.1 419.9,133.3 421.6,130.6 423.3,127.0 425.0,128.1 426.7,133.3 428.4,125.3 430.1,131.1 431.8,125.0 433.5,126.1 435.2,129.3 436.9,127.9 438.6,131.4 440.3,127.0 442.0,127.3 443.7,128.7 445.4,129.1 447.1,125.2 448.8,127.6 450.5,127.3 452.2,130.7 453.9,126.1 455.6,130.4 457.3,127.1 459.0,126.3 460.7,124.5 462.4,127.9 464.1,127.8 465.8,128.6 467.5,125.8 469.2,129.5 470.9,128.2 472.6,126.3 474.3,129.5 476.0,125.4 477.7,127.2 479.4,127.6 481.1,126.3 482.8,122.6 484.5,127.1 486.2,123.2 487.9,125.5 489.6,122.4 491.3,124.8 493.0,123.3 494.7,127.6 496.4,122.1 498.1,125.0 499.8,123.5 501.5,127.3 503.2,120.8 504.9,128.2 506.6,121.3 508.3,123.7 510.0,125.2 511.7,121.8 513.4,121.7 515.1,124.8 516.8,125.5 518.5,119.9 520.2,124.7 521.9,122.5 523.6,125.4 525.3,123.0 527.0,124.7 528.7,122.2 530.4,121.3 532.1,125.4 533.8,120.6 535.5,120.1 537.2,124.7 538.9,120.2 540.6,121.9 542.3,119.9 544.0,123.8 545.7,121.9 547.4,123.9 549.1,119.8 550.8,122.9 552.5,121.6 554.2,117.7 555.9,121.0 557.6,121.2 559.3,118.8 561.0,123.8 562.7,120.7 564.4,118.1 566.1,122.9 567.8,123.9 569.5,117.8 571.2,121.8 572.9,123.6 574.6,121.4 576.3,120.0 578.0,124.2 579.7,123.1 581.4,121.8 583.1,119.7 584.8,118.7 586.5,119.8 588.2,120.3 589.9,121.1 591.6,119.2 593.3,121.1 595.0,123.3 596.7,121.1 598.4,124.2 600.1,117.8 601.8,122.6 603.5,119.7 605.2,122.0 606.9,120.4 608.6,126.2 610.3,123.4 612.0,124.7 613.7,123.4 615.4,127.4 617.1,123.7 618.8,121.8" fill="none" stroke="#999999" stroke-width="1" shape-rendering="crispEdges"/>
<polyline points="75.5,68.4 77.8,72.6 80.0,67.0 82.3,67.1 84.6,70.8 86.8,64.5 89.1,67.7 91.4,72.0 93.7,71.5 95.9,69.0 98.2,64.6 100.5,71.6 102.7,65.3 105.0,67.2 107.3,69.9 109.5,69.4 111.8,69.6 114.1,69.3 116.4,74.2 118.6,70.6 120.9,68.2 123.2,68.4 125.4,73.4 127.7,71.8 130.0,73.7 132.2,64.9 134.5,77.1 136.8,71.8 139.1,67.1 141.3,75.6 143.6,65.8 145.9,78.3 148.1,65.1 150.4,70.1 152.7,75.4 155.0,71.0 157.2,70.3 159.5,70.4 161.8,70.4 164.0,71.3 166.3,77.3 168.6,68.8 170.8,72.3 173.1,76.1 175.4,67.9 177.7,73.0 179.9,75.3 182.2,69.4 184.5,71.6" fill="none" stroke="#00a4ff" stroke-width="1" shape-rendering="crispEdges"/>
<polyline points="195.2,66.7 196.5,77.9 198.4,76.0 201.2,80.7 203.1,77.9 205.9,79.7 207.7,77.5 210.5,81.6" fill="none" stroke="#00a4ff" stroke-width="1" shape-rendering="crispEdges"/>
<polyline points="211.1,106.8 213.3,92.8 215.2,89.1 218.0,88.1 221.4,74.1 224.5,85.3 228.3,91.3 232.0,81.6 238.5,60.1 241.3,77.9 244.1,86.3 247.3,73.2 249.7,84.4 252.0,90.0 254.4,87.2 257.2,99.3 261.5,69.5 264.7,85.3 267.5,87.6 270.6,85.3 274.9,71.9 277.7,83.5 280.9,96.9" fill="none" stroke="#00a4ff" stroke-width="1" shape-rendering="crispEdges"/>
<polyline points="291.4,71.3 293.6,74.1 295.5,69.5 297.9,84.4 300.1,74.1 302.0,68.5 303.9,73.2 305.7,71.3 308.5,76.0 310.4,82.5 312.3,109.6 312.6,121.7 314.7,105.9 316.9,85.3 319.7,72.3 322.5,66.7 325.3,99.3 329.0,98.4 331.5,81.6 334.2,64.8 338.2,87.7 341.8,109.1 345.2,87.7 348.3,69.4 352.5,86.2 356.5,99.9 359.9,81.6 362.6,68.8 366.6,83.1 370.3,93.8 373.0,83.1 375.5,74.9 378.8,86.2 381.9,95.4 385.5,92.3" fill="none" stroke="#00a4ff" stroke-width="1" shape-rendering="crispEdges"/>
<polyline points="388.6,54.1 391.0,58.7 393.2,66.9" fill="none" stroke="#00a4ff" stroke-width="1" shape-rendering="crispEdges"/>
<polyline points="397.8,76.2 399.5,78.3 401.2,69.1 402.9,73.8 404.6,77.5 406.3,74.6 408.0,69.7 409.7,70.4 411.4,68.5 413.1,68.6 414.8,71.1 416.5,77.9 418.2,65.1 419.9,72.3 421.6,75.5 423.3,64.8 425.0,66.7 426.7,71.3 428.4,72.0 430.1,65.9 431.8,69.3 433.5,70.4 435.2,67.9 436.9,71.7 438.6,72.8 440.3,67.8 442.0,71.3 443.7,66.2 445.4,69.1 447.1,71.9 448.8,65.5 450.5,69.8 452.2,67.3 453.9,69.1 455.6,66.6 457.3,67.6 459.0,66.1 460.7,68.6 462.4,65.7 464.1,67.3 465.8,68.8 467.5,68.4 469.2,66.0 470.9,67.8 472.6,70.1 474.3,63.9 476.0,70.8 477.7,64.3 479.4,64.8 481.1,71.7 482.8,66.5 484.5,66.0 486.2,69.8 487.9,64.3 489.6,67.1 491.3,64.7 493.0,69.8 494.7,64.0 496.4,64.9 498.1,66.3 499.8,67.3 501.5,63.7 503.2,67.3 504.9,62.2 506.6,65.2 508.3,64.5 510.0,65.4 511.7,67.8 513.4,65.9 515.1,64.8 516.8,66.3 518.5,62.5 520.2,66.0 521.9,59.7 523.6,67.5 525.3,65.7 527.0,63.1 528.7,61.8 530.4,62.1 532.1,66.4 533.8,62.5 535.5,60.0 537.2,64.8 538.9,60.3 540.6,61.7 542.3,58.6 544.0,61.8 545.7,64.4 547.4,65.2 549.1,58.1 550.8,62.6 552.5,63.3 554.2,59.8 555.9,67.4 557.6,59.7 559.3,60.0 561.0,60.0 562.7,62.0 564.4,59.0 566.1,62.9 567.8,59.3 569.5,64.5 571.2,58.6 572.9,63.8 574.6,62.0 576.3,64.5 578.0,61.7 579.7,62.7 581.4,60.8 583.1,59.8 584.8,59.5 586.5,59.0 588.2,64.3 589.9,64.3 591.6,60.3 593.3,65.1 595.0,58.4 596.7,65.2 598.4,63.6 600.1,62.7 601.8,61.4 603.5,61.6 605.2,64.9 606.9,59.8 608.6,66.7 610.3,58.5 612.0,66.4 613.7,61.0 615.4,61.8 617.1,65.9 618.8,60.2" fill="none" stroke="#00a4ff" stroke-width="1" shape-rendering="crispEdges"/>
</g>
<g shape-rendering="crispEdges">
<rect x="75" y="282" width="113" height="23" fill="#4cb000"/>
<rect x="195" y="282" width="359" height="23" fill="#4cb000"/>
<rect x="555" y="282" width="65" height="23" fill="#4cb000"/>
<rect x="75" y="312" width="113" height="23" fill="#989898"/>
<rect x="195" y="312" width="359" height="23" fill="#989898"/>
<rect x="555" y="312" width="65" height="23" fill="#989898"/>
<rect x="191" y="292" width="1" height="1" fill="#ffffff"/>
<rect x="191" y="323" width="1" height="1" fill="#ffffff"/>
</g>
<g shape-rendering="crispEdges">
<line x1="83" y1="374.5" x2="612" y2="374.5" stroke="#fff" stroke-width="1" stroke-dasharray="1 3"/>
<rect x="75" y="374" width="6" height="1" fill="#ffffff"/>
<rect x="613" y="374" width="7" height="1" fill="#ffffff"/>
<line x1="83" y1="393.5" x2="612" y2="393.5" stroke="#fff" stroke-width="1" stroke-dasharray="1 3"/>
<rect x="75" y="393" width="6" height="1" fill="#ffffff"/>
<rect x="613" y="393" width="7" height="1" fill="#ffffff"/>
<line x1="83" y1="411.5" x2="612" y2="411.5" stroke="#fff" stroke-width="1" stroke-dasharray="1 3"/>
<rect x="75" y="411" width="6" height="1" fill="#ffffff"/>
<rect x="613" y="411" width="7" height="1" fill="#ffffff"/>
<line x1="83" y1="430.5" x2="612" y2="430.5" stroke="#fff" stroke-width="1" stroke-dasharray="1 3"/>
<rect x="75" y="430" width="6" height="1" fill="#ffffff"/>
<rect x="613" y="430" width="7" height="1" fill="#ffffff"/>
<line x1="83" y1="449.5" x2="612" y2="449.5" stroke="#fff" stroke-width="1" stroke-dasharray="1 3"/>
<rect x="75" y="449" width="6" height="1" fill="#ffffff"/>
<rect x="613" y="449" width="7" height="1" fill="#ffffff"/>
<line x1="83" y1="467.5" x2="612" y2="467.5" stroke="#fff" stroke-width="1" stroke-dasharray="1 3"/>
<rect x="75" y="467" width="6" height="1" fill="#ffffff"/>
<rect x="613" y="467" width="7" height="1" fill="#ffffff"/>
<line x1="83" y1="486.5" x2="612" y2="486.5" stroke="#fff" stroke-width="1" stroke-dasharray="1 3"/>
<rect x="75" y="486" width="6" height="1" fill="#ffffff"/>
<rect x="613" y="486" width="7" height="1" fill="#ffffff"/>
<line x1="83" y1="504.5" x2="612" y2="504.5" stroke="#fff" stroke-width="1" stroke-dasharray="1 3"/>
<rect x="75" y="504" width="6" height="1" fill="#ffffff"/>
<rect x="613" y="504" width="7" height="1" fill="#ffffff"/>
<line x1="83" y1="523.5" x2="612" y2="523.5" stroke="#fff" stroke-width="1" stroke-dasharray="1 3"/>
<rect x="75" y="523" width="6" height="1" fill="#ffffff"/>
<rect x="613" y="523" width="7" height="1" fill="#ffffff"/>
<rect x="75" y="365" width="4" height="1" fill="#ffffff"/>
<rect x="616" y="365" width="4" height="1" fill="#ffffff"/>
<rect x="75" y="383" width="4" height="1" fill="#ffffff"/>
<rect x="616" y="383" width="4" height="1" fill="#ffffff"/>
<rect x="75" y="402" width="4" height="1" fill="#ffffff"/>
<rect x="616" y="402" width="4" height="1" fill="#ffffff"/>
<rect x="75" y="420" width="4" height="1" fill="#ffffff"/>
<rect x="616" y="420" width="4" height="1" fill="#ffffff"/>
<rect x="75" y="439" width="4" height="1" fill="#ffffff"/>
<rect x="616" y="439" width="4" height="1" fill="#ffffff"/>
<rect x="75" y="458" width="4" height="1" fill="#ffffff"/>
<rect x="616" y="458" width="4" height="1" fill="#ffffff"/>
<rect x="75" y="476" width="4" height="1" fill="#ffffff"/>
<rect x="616" y="476" width="4" height="1" fill="#ffffff"/>
<rect x="75" y="495" width="4" height="1" fill="#ffffff"/>
<rect x="616" y="495" width="4" height="1" fill="#ffffff"/>
<rect x="75" y="514" width="4" height="1" fill="#ffffff"/>
<rect x="616" y="514" width="4" height="1" fill="#ffffff"/>
<rect x="75" y="532" width="4" height="1" fill="#ffffff"/>
<rect x="616" y="532" width="4" height="1" fill="#ffffff"/>
<rect x="621" y="357" width="3" height="9" fill="#4cb000"/>
<rect x="621" y="366" width="3" height="9" fill="#ff00ff"/>
<rect x="621" y="375" width="3" height="9" fill="#00a4ff"/>
<rect x="621" y="384" width="3" height="10" fill="#ff0000"/>
<rect x="621" y="394" width="3" height="9" fill="#989898"/>
<rect x="621" y="403" width="3" height="9" fill="#ff9000"/>
<rect x="621" y="412" width="3" height="9" fill="#4cb000"/>
<rect x="621" y="421" width="3" height="9" fill="#ff00ff"/>
<rect x="621" y="430" width="3" height="10" fill="#00a4ff"/>
<rect x="621" y="440" width="3" height="9" fill="#ff0000"/>
<rect x="621" y="449" width="3" height="9" fill="#989898"/>
<rect x="621" y="458" width="3" height="10" fill="#ff9000"/>
<rect x="621" y="468" width="3" height="9" fill="#4cb000"/>
<rect x="621" y="477" width="3" height="9" fill="#ff00ff"/>
<rect x="621" y="486" width="3" height="9" fill="#00a4ff"/>
<rect x="621" y="495" width="3" height="9" fill="#ff0000"/>
<rect x="621" y="504" width="3" height="10" fill="#989898"/>
<rect x="621" y="514" width="3" height="9" fill="#ff9000"/>
<rect x="621" y="523" width="3" height="9" fill="#4cb000"/>
<rect x="621" y="532" width="3" height="10" fill="#ff00ff"/>
</g>
<g shape-rendering="crispEdges">
<rect x="188" y="369" width="7" height="1" fill="#ff00ff"/>
<rect x="211" y="361" width="80" height="1" fill="#4cb000"/>
<rect x="315" y="361" width="82" height="1" fill="#4cb000"/>
<rect x="75" y="383" width="12" height="1" fill="#00a4ff"/>
<rect x="87" y="384" width="13" height="1" fill="#ff0000"/>
<rect x="100" y="385" width="11" height="1" fill="#ff0000"/>
<rect x="111" y="386" width="5" height="1" fill="#ff0000"/>
<rect x="116" y="385" width="11" height="1" fill="#ff0000"/>
<rect x="127" y="384" width="13" height="1" fill="#ff0000"/>
<rect x="140" y="383" width="23" height="1" fill="#00a4ff"/>
<rect x="163" y="384" width="11" height="1" fill="#ff0000"/>
<rect x="174" y="383" width="5" height="1" fill="#00a4ff"/>
<rect x="179" y="384" width="4" height="1" fill="#ff0000"/>
<rect x="183" y="385" width="4" height="1" fill="#ff0000"/>
<rect x="187" y="384" width="4" height="1" fill="#ff0000"/>
<rect x="191" y="383" width="4" height="1" fill="#00a4ff"/>
<rect x="195" y="382" width="14" height="1" fill="#00a4ff"/>
<rect x="289" y="382" width="20" height="1" fill="#00a4ff"/>
<rect x="389" y="382" width="29" height="1" fill="#00a4ff"/>
<rect x="418" y="383" width="22" height="1" fill="#00a4ff"/>
<rect x="440" y="384" width="4" height="1" fill="#ff0000"/>
<rect x="444" y="383" width="30" height="1" fill="#00a4ff"/>
<rect x="474" y="384" width="49" height="1" fill="#ff0000"/>
<rect x="523" y="383" width="56" height="1" fill="#00a4ff"/>
<rect x="579" y="384" width="40" height="1" fill="#ff0000"/>
<rect x="75" y="411" width="135" height="1" fill="#ff9000"/>
<rect x="77" y="411" width="19" height="3" fill="#ff9000"/>
<rect x="128" y="411" width="22" height="3" fill="#ff9000"/>
<rect x="155" y="411" width="25" height="3" fill="#ff9000"/>
<rect x="187" y="411" width="7" height="3" fill="#ff9000"/>
<rect x="92" y="410" width="7" height="1" fill="#ff9000"/>
<rect x="107" y="410" width="12" height="1" fill="#ff9000"/>
<rect x="146" y="410" width="5" height="1" fill="#ff9000"/>
<rect x="288" y="410" width="21" height="1" fill="#ff9000"/>
<rect x="298" y="411" width="8" height="1" fill="#ff9000"/>
<rect x="388" y="410" width="30" height="1" fill="#ff9000"/>
<rect x="400" y="411" width="18" height="1" fill="#ff9000"/>
<rect x="418" y="411" width="201" height="3" fill="#ff9000"/>
<rect x="418" y="410" width="28" height="1" fill="#ff9000"/>
<rect x="450" y="410" width="16" height="1" fill="#ff9000"/>
<rect x="480" y="410" width="15" height="1" fill="#ff9000"/>
<rect x="547" y="410" width="5" height="1" fill="#ff9000"/>
<rect x="601" y="410" width="8" height="1" fill="#ff9000"/>
<rect x="75" y="420" width="38" height="1" fill="#4cb000"/>
<rect x="113" y="421" width="32" height="1" fill="#4cb000"/>
<rect x="145" y="421" width="25" height="1" fill="#ff00ff"/>
<rect x="170" y="421" width="8" height="1" fill="#4cb000"/>
<rect x="178" y="421" width="15" height="1" fill="#ff00ff"/>
<rect x="193" y="420" width="2" height="1" fill="#4cb000"/>
<rect x="195" y="419" width="213" height="1" fill="#4cb000"/>
<rect x="408" y="420" width="3" height="1" fill="#4cb000"/>
<rect x="411" y="421" width="173" height="1" fill="#ff00ff"/>
<rect x="431" y="420" width="2" height="1" fill="#4cb000"/>
<rect x="439" y="420" width="2" height="1" fill="#4cb000"/>
<rect x="584" y="420" width="19" height="1" fill="#4cb000"/>
<rect x="603" y="419" width="16" height="1" fill="#4cb000"/>
<rect x="75" y="447" width="17" height="1" fill="#ff0000"/>
<rect x="92" y="446" width="12" height="1" fill="#ff0000"/>
<rect x="104" y="445" width="16" height="1" fill="#ff0000"/>
<rect x="120" y="446" width="15" height="1" fill="#ff0000"/>
<rect x="135" y="447" width="28" height="1" fill="#ff0000"/>
<rect x="163" y="446" width="5" height="1" fill="#ff0000"/>
<rect x="168" y="447" width="11" height="1" fill="#ff0000"/>
<rect x="179" y="446" width="13" height="1" fill="#ff0000"/>
<rect x="196" y="439" width="204" height="1" fill="#00a4ff"/>
<rect x="400" y="439" width="7" height="1" fill="#ff0000"/>
<rect x="412" y="447" width="29" height="1" fill="#ff0000"/>
<rect x="441" y="446" width="5" height="1" fill="#ff0000"/>
<rect x="446" y="447" width="34" height="1" fill="#ff0000"/>
<rect x="480" y="446" width="38" height="1" fill="#ff0000"/>
<rect x="518" y="447" width="66" height="1" fill="#ff0000"/>
<rect x="584" y="446" width="35" height="1" fill="#ff0000"/>
<rect x="216" y="439" width="6" height="1" fill="#000"/>
<rect x="216" y="439" width="1" height="1" fill="#ff0000"/>
<rect x="221" y="439" width="1" height="1" fill="#ff0000"/>
<rect x="217" y="440" width="4" height="1" fill="#ff0000"/>
<rect x="229" y="439" width="6" height="1" fill="#000"/>
<rect x="229" y="439" width="1" height="1" fill="#ff0000"/>
<rect x="234" y="439" width="1" height="1" fill="#ff0000"/>
<rect x="230" y="440" width="4" height="1" fill="#ff0000"/>
<rect x="242" y="439" width="6" height="1" fill="#000"/>
<rect x="242" y="439" width="1" height="1" fill="#ff0000"/>
<rect x="247" y="439" width="1" height="1" fill="#ff0000"/>
<rect x="243" y="440" width="4" height="1" fill="#ff0000"/>
<rect x="256" y="439" width="6" height="1" fill="#000"/>
<rect x="256" y="439" width="1" height="1" fill="#ff0000"/>
<rect x="261" y="439" width="1" height="1" fill="#ff0000"/>
<rect x="257" y="440" width="4" height="1" fill="#ff0000"/>
<rect x="269" y="439" width="6" height="1" fill="#000"/>
<rect x="269" y="439" width="1" height="1" fill="#ff0000"/>
<rect x="274" y="439" width="1" height="1" fill="#ff0000"/>
<rect x="270" y="440" width="4" height="1" fill="#ff0000"/>
<rect x="282" y="439" width="6" height="1" fill="#000"/>
<rect x="282" y="439" width="2" height="1" fill="#ff0000"/>
<rect x="288" y="439" width="1" height="1" fill="#ff0000"/>
<rect x="284" y="440" width="4" height="1" fill="#ff0000"/>
<rect x="316" y="439" width="6" height="1" fill="#000"/>
<rect x="316" y="439" width="1" height="1" fill="#ff0000"/>
<rect x="321" y="439" width="1" height="1" fill="#ff0000"/>
<rect x="317" y="440" width="4" height="1" fill="#ff0000"/>
<rect x="329" y="439" width="6" height="1" fill="#000"/>
<rect x="329" y="439" width="1" height="1" fill="#ff0000"/>
<rect x="334" y="439" width="1" height="1" fill="#ff0000"/>
<rect x="330" y="440" width="4" height="1" fill="#ff0000"/>
<rect x="343" y="439" width="6" height="1" fill="#000"/>
<rect x="343" y="439" width="1" height="1" fill="#ff0000"/>
<rect x="348" y="439" width="1" height="1" fill="#ff0000"/>
<rect x="344" y="440" width="4" height="1" fill="#ff0000"/>
<rect x="356" y="439" width="6" height="1" fill="#000"/>
<rect x="356" y="439" width="1" height="1" fill="#ff0000"/>
<rect x="361" y="439" width="1" height="1" fill="#ff0000"/>
<rect x="357" y="440" width="4" height="1" fill="#ff0000"/>
<rect x="369" y="439" width="6" height="1" fill="#000"/>
<rect x="369" y="439" width="1" height="1" fill="#ff0000"/>
<rect x="374" y="439" width="1" height="1" fill="#ff0000"/>
<rect x="370" y="440" width="4" height="1" fill="#ff0000"/>
<rect x="383" y="439" width="6" height="1" fill="#000"/>
<rect x="383" y="439" width="1" height="1" fill="#ff0000"/>
<rect x="388" y="439" width="1" height="1" fill="#ff0000"/>
<rect x="384" y="440" width="4" height="1" fill="#ff0000"/>
<rect x="75" y="457" width="7" height="1" fill="#989898"/>
<rect x="82" y="456" width="12" height="1" fill="#989898"/>
<rect x="94" y="455" width="13" height="1" fill="#989898"/>
<rect x="107" y="454" width="14" height="1" fill="#989898"/>
<rect x="121" y="455" width="13" height="1" fill="#989898"/>
<rect x="134" y="456" width="12" height="1" fill="#989898"/>
<rect x="146" y="457" width="9" height="1" fill="#989898"/>
<rect x="155" y="456" width="23" height="1" fill="#989898"/>
<rect x="178" y="455" width="8" height="1" fill="#989898"/>
<rect x="186" y="456" width="8" height="1" fill="#989898"/>
<rect x="194" y="457" width="19" height="1" fill="#989898"/>
<rect x="286" y="457" width="26" height="1" fill="#989898"/>
<rect x="385" y="457" width="33" height="1" fill="#989898"/>
<rect x="418" y="456" width="59" height="1" fill="#989898"/>
<rect x="477" y="455" width="40" height="1" fill="#989898"/>
<rect x="517" y="456" width="33" height="1" fill="#989898"/>
<rect x="550" y="457" width="6" height="1" fill="#989898"/>
<rect x="556" y="456" width="34" height="1" fill="#989898"/>
<rect x="590" y="455" width="25" height="1" fill="#989898"/>
<rect x="615" y="456" width="4" height="1" fill="#989898"/>
<rect x="213" y="458" width="7" height="1" fill="#ff9000"/>
<rect x="220" y="458" width="6" height="1" fill="#989898"/>
<rect x="222" y="458" width="2" height="1" fill="#000"/>
<rect x="222" y="457" width="2" height="1" fill="#989898"/>
<rect x="226" y="458" width="6" height="1" fill="#ff9000"/>
<rect x="232" y="458" width="6" height="1" fill="#989898"/>
<rect x="234" y="458" width="2" height="1" fill="#000"/>
<rect x="234" y="457" width="2" height="1" fill="#989898"/>
<rect x="238" y="458" width="8" height="1" fill="#ff9000"/>
<rect x="246" y="458" width="6" height="1" fill="#989898"/>
<rect x="248" y="458" width="2" height="1" fill="#000"/>
<rect x="248" y="457" width="2" height="1" fill="#989898"/>
<rect x="252" y="458" width="8" height="1" fill="#ff9000"/>
<rect x="260" y="458" width="4" height="1" fill="#989898"/>
<rect x="262" y="458" width="1" height="1" fill="#000"/>
<rect x="262" y="457" width="1" height="1" fill="#989898"/>
<rect x="264" y="458" width="8" height="1" fill="#ff9000"/>
<rect x="272" y="458" width="6" height="1" fill="#989898"/>
<rect x="274" y="458" width="2" height="1" fill="#000"/>
<rect x="274" y="457" width="2" height="1" fill="#989898"/>
<rect x="278" y="458" width="8" height="1" fill="#ff9000"/>
<rect x="312" y="458" width="8" height="1" fill="#ff9000"/>
<rect x="320" y="458" width="6" height="1" fill="#989898"/>
<rect x="322" y="458" width="3" height="1" fill="#000"/>
<rect x="322" y="457" width="3" height="1" fill="#989898"/>
<rect x="326" y="458" width="7" height="1" fill="#ff9000"/>
<rect x="333" y="458" width="6" height="1" fill="#989898"/>
<rect x="334" y="458" width="4" height="1" fill="#000"/>
<rect x="334" y="457" width="4" height="1" fill="#989898"/>
<rect x="339" y="458" width="8" height="1" fill="#ff9000"/>
<rect x="347" y="458" width="6" height="1" fill="#989898"/>
<rect x="348" y="458" width="4" height="1" fill="#000"/>
<rect x="348" y="457" width="4" height="1" fill="#989898"/>
<rect x="353" y="458" width="9" height="1" fill="#ff9000"/>
<rect x="362" y="458" width="3" height="1" fill="#989898"/>
<rect x="363" y="458" width="1" height="1" fill="#000"/>
<rect x="363" y="457" width="1" height="1" fill="#989898"/>
<rect x="365" y="458" width="8" height="1" fill="#ff9000"/>
<rect x="373" y="458" width="5" height="1" fill="#989898"/>
<rect x="374" y="458" width="3" height="1" fill="#000"/>
<rect x="374" y="457" width="3" height="1" fill="#989898"/>
<rect x="378" y="458" width="7" height="1" fill="#ff9000"/>
<rect x="75" y="478" width="117" height="1" fill="#ff00ff"/>
<rect x="196" y="485" width="210" height="3" fill="#ff00ff"/>
<rect x="410" y="479" width="8" height="1" fill="#ff00ff"/>
<rect x="418" y="478" width="186" height="1" fill="#ff00ff"/>
<rect x="604" y="479" width="15" height="1" fill="#ff00ff"/>
<rect x="75" y="497" width="20" height="1" fill="#ff0000"/>
<rect x="95" y="496" width="35" height="1" fill="#ff0000"/>
<rect x="130" y="497" width="55" height="1" fill="#ff0000"/>
<rect x="185" y="498" width="7" height="1" fill="#ff0000"/>
<rect x="194" y="503" width="16" height="4" fill="#ff0000"/>
<rect x="289" y="503" width="20" height="4" fill="#ff0000"/>
<rect x="389" y="503" width="18" height="4" fill="#ff0000"/>
<rect x="411" y="497" width="208" height="1" fill="#ff0000"/>
<rect x="75" y="512" width="65" height="1" fill="#989898"/>
<rect x="140" y="513" width="30" height="1" fill="#989898"/>
<rect x="170" y="512" width="22" height="1" fill="#989898"/>
<rect x="196" y="514" width="14" height="1" fill="#989898"/>
<rect x="292" y="514" width="17" height="1" fill="#989898"/>
<rect x="390" y="514" width="14" height="1" fill="#ff9000"/>
<rect x="406" y="514" width="15" height="1" fill="#989898"/>
<rect x="421" y="513" width="8" height="1" fill="#989898"/>
<rect x="429" y="512" width="5" height="1" fill="#989898"/>
<rect x="434" y="513" width="12" height="1" fill="#989898"/>
<rect x="446" y="514" width="124" height="1" fill="#989898"/>
<rect x="570" y="513" width="49" height="1" fill="#989898"/>
<rect x="75" y="526" width="116" height="1" fill="#4cb000"/>
<rect x="196" y="532" width="210" height="1" fill="#ff00ff"/>
<rect x="410" y="526" width="209" height="1" fill="#4cb000"/>
</g>
<polyline points="192.0,478.5 194.0,480.0 196.0,485.5" fill="none" stroke="#ff00ff" stroke-width="1.5" shape-rendering="crispEdges"/>
<polyline points="406.4,485.5 408.5,481.0 410.0,479.5" fill="none" stroke="#ff00ff" stroke-width="1.5" shape-rendering="crispEdges"/>
<polyline points="192.0,498.5 193.5,500.0 195.0,504.0" fill="none" stroke="#ff0000" stroke-width="1.5" shape-rendering="crispEdges"/>
<polyline points="407.3,504.0 409.0,500.0 411.0,497.5" fill="none" stroke="#ff0000" stroke-width="1.5" shape-rendering="crispEdges"/>
<polyline points="192.5,447.5 194.0,445.0 196.4,439.5" fill="none" stroke="#ff0000" stroke-width="1" shape-rendering="crispEdges"/>
<polyline points="407.0,439.5 409.0,443.0 412.0,447.5" fill="none" stroke="#ff0000" stroke-width="1" shape-rendering="crispEdges"/>
<polyline points="192.0,512.5 194.0,513.5 196.0,514.5" fill="none" stroke="#989898" stroke-width="1" shape-rendering="crispEdges"/>
<polyline points="191.2,526.5 194.0,529.0 196.4,532.5" fill="none" stroke="#4cb000" stroke-width="1" shape-rendering="crispEdges"/>
<polyline points="406.4,532.5 408.0,529.0 410.0,526.5" fill="none" stroke="#4cb000" stroke-width="1" shape-rendering="crispEdges"/>
<polyline points="288.3,517.0 290.0,515.0 292.0,514.5" fill="none" stroke="#ff9000" stroke-width="1" shape-rendering="crispEdges"/>
<polyline points="387.7,517.0 389.0,515.0 390.5,514.5" fill="none" stroke="#ff9000" stroke-width="1" shape-rendering="crispEdges"/>
<line x1="209.0" y1="382.5" x2="209.9" y2="384.5" stroke="#00a4ff" stroke-width="1.1" shape-rendering="crispEdges"/>
<line x1="210.7" y1="386.5" x2="211.6" y2="388.6" stroke="#ff0000" stroke-width="1.1" shape-rendering="crispEdges"/>
<line x1="217.4" y1="382.8" x2="219.6" y2="378.6" stroke="#00a4ff" stroke-width="1.1" shape-rendering="crispEdges"/>
<line x1="214.9" y1="387.9" x2="216.5" y2="384.7" stroke="#ff0000" stroke-width="1.1" shape-rendering="crispEdges"/>
<line x1="220.4" y1="378.6" x2="222.2" y2="382.8" stroke="#00a4ff" stroke-width="1.1" shape-rendering="crispEdges"/>
<line x1="223.8" y1="386.8" x2="225.6" y2="391.0" stroke="#ff0000" stroke-width="1.1" shape-rendering="crispEdges"/>
<line x1="226.4" y1="391.0" x2="228.5" y2="386.8" stroke="#ff0000" stroke-width="1.1" shape-rendering="crispEdges"/>
<line x1="229.5" y1="384.9" x2="231.1" y2="381.7" stroke="#00a4ff" stroke-width="1.1" shape-rendering="crispEdges"/>
<line x1="234.9" y1="382.0" x2="236.4" y2="385.2" stroke="#00a4ff" stroke-width="1.1" shape-rendering="crispEdges"/>
<line x1="241.7" y1="386.5" x2="243.2" y2="383.3" stroke="#ff0000" stroke-width="1.1" shape-rendering="crispEdges"/>
<line x1="250.2" y1="386.8" x2="252.4" y2="391.0" stroke="#ff0000" stroke-width="1.1" shape-rendering="crispEdges"/>
<line x1="247.6" y1="381.7" x2="249.2" y2="384.9" stroke="#00a4ff" stroke-width="1.1" shape-rendering="crispEdges"/>
<line x1="253.2" y1="391.0" x2="255.1" y2="386.8" stroke="#ff0000" stroke-width="1.1" shape-rendering="crispEdges"/>
<line x1="257.0" y1="382.8" x2="258.9" y2="378.6" stroke="#00a4ff" stroke-width="1.1" shape-rendering="crispEdges"/>
<line x1="259.7" y1="378.6" x2="261.6" y2="382.8" stroke="#00a4ff" stroke-width="1.1" shape-rendering="crispEdges"/>
<line x1="262.5" y1="384.7" x2="263.9" y2="387.9" stroke="#ff0000" stroke-width="1.1" shape-rendering="crispEdges"/>
<line x1="268.4" y1="385.9" x2="269.8" y2="382.7" stroke="#ff0000" stroke-width="1.1" shape-rendering="crispEdges"/>
<line x1="276.5" y1="386.8" x2="278.6" y2="391.0" stroke="#ff0000" stroke-width="1.1" shape-rendering="crispEdges"/>
<line x1="273.9" y1="381.7" x2="275.5" y2="384.9" stroke="#00a4ff" stroke-width="1.1" shape-rendering="crispEdges"/>
<line x1="279.4" y1="391.0" x2="281.3" y2="386.8" stroke="#ff0000" stroke-width="1.1" shape-rendering="crispEdges"/>
<line x1="282.2" y1="384.9" x2="283.7" y2="381.7" stroke="#00a4ff" stroke-width="1.1" shape-rendering="crispEdges"/>
<line x1="285.5" y1="377.8" x2="289.0" y2="382.5" stroke="#00a4ff" stroke-width="1.1" shape-rendering="crispEdges"/>
<polygon points="209.7,388.9 214.3,388.9 214.1,392.7 211.7,392.7" fill="#ff0000" shape-rendering="crispEdges"/>
<rect x="218.7" y="377.1" width="2.6" height="1" fill="#00a4ff" shape-rendering="crispEdges"/>
<rect x="224.8" y="391.6" width="2.4" height="1" fill="#ff0000" shape-rendering="crispEdges"/>
<polygon points="230.6,380.2 233.0,377.1 236.6,377.1 234.6,380.2" fill="#00a4ff" shape-rendering="crispEdges"/>
<polygon points="236.2,388.9 240.8,388.9 240.6,392.7 238.2,392.7" fill="#ff0000" shape-rendering="crispEdges"/>
<polygon points="243.2,380.2 244.6,377.1 248.2,377.1 247.2,380.2" fill="#00a4ff" shape-rendering="crispEdges"/>
<rect x="251.6" y="391.6" width="2.4" height="1" fill="#ff0000" shape-rendering="crispEdges"/>
<rect x="258.0" y="377.1" width="2.6" height="1" fill="#00a4ff" shape-rendering="crispEdges"/>
<polygon points="262.5,388.9 267.1,388.9 266.9,392.7 264.5,392.7" fill="#ff0000" shape-rendering="crispEdges"/>
<polygon points="269.6,380.2 270.0,377.1 273.6,377.1 273.6,380.2" fill="#00a4ff" shape-rendering="crispEdges"/>
<rect x="277.8" y="391.6" width="2.4" height="1" fill="#ff0000" shape-rendering="crispEdges"/>
<polygon points="283.1,380.2 283.5,377.1 287.1,377.1 287.1,380.2" fill="#00a4ff" shape-rendering="crispEdges"/>
<line x1="309.0" y1="382.5" x2="309.8" y2="384.5" stroke="#00a4ff" stroke-width="1.1" shape-rendering="crispEdges"/>
<line x1="311.4" y1="388.5" x2="312.5" y2="391.2" stroke="#ff0000" stroke-width="1.1" shape-rendering="crispEdges"/>
<line x1="310.0" y1="385.1" x2="310.9" y2="387.2" stroke="#ff0000" stroke-width="1.1" shape-rendering="crispEdges"/>
<line x1="313.1" y1="391.0" x2="315.4" y2="386.8" stroke="#ff0000" stroke-width="1.1" shape-rendering="crispEdges"/>
<line x1="317.5" y1="382.8" x2="319.8" y2="378.6" stroke="#00a4ff" stroke-width="1.1" shape-rendering="crispEdges"/>
<line x1="320.5" y1="378.6" x2="322.1" y2="382.8" stroke="#00a4ff" stroke-width="1.1" shape-rendering="crispEdges"/>
<line x1="322.8" y1="384.7" x2="324.0" y2="387.9" stroke="#ff0000" stroke-width="1.1" shape-rendering="crispEdges"/>
<line x1="328.0" y1="386.6" x2="329.6" y2="383.4" stroke="#ff0000" stroke-width="1.1" shape-rendering="crispEdges"/>
<line x1="336.5" y1="386.8" x2="338.4" y2="391.0" stroke="#ff0000" stroke-width="1.1" shape-rendering="crispEdges"/>
<line x1="334.2" y1="381.7" x2="335.6" y2="384.9" stroke="#00a4ff" stroke-width="1.1" shape-rendering="crispEdges"/>
<line x1="339.2" y1="391.0" x2="341.3" y2="386.8" stroke="#ff0000" stroke-width="1.1" shape-rendering="crispEdges"/>
<line x1="343.2" y1="382.8" x2="345.3" y2="378.6" stroke="#00a4ff" stroke-width="1.1" shape-rendering="crispEdges"/>
<line x1="346.1" y1="378.6" x2="348.2" y2="382.8" stroke="#00a4ff" stroke-width="1.1" shape-rendering="crispEdges"/>
<line x1="350.1" y1="386.8" x2="352.2" y2="391.0" stroke="#ff0000" stroke-width="1.1" shape-rendering="crispEdges"/>
<line x1="353.0" y1="391.0" x2="354.8" y2="386.8" stroke="#ff0000" stroke-width="1.1" shape-rendering="crispEdges"/>
<line x1="355.7" y1="384.9" x2="357.1" y2="381.7" stroke="#00a4ff" stroke-width="1.1" shape-rendering="crispEdges"/>
<line x1="361.2" y1="382.9" x2="362.7" y2="386.2" stroke="#ff0000" stroke-width="1.1" shape-rendering="crispEdges"/>
<line x1="368.1" y1="385.9" x2="369.6" y2="382.7" stroke="#ff0000" stroke-width="1.1" shape-rendering="crispEdges"/>
<line x1="375.1" y1="384.4" x2="376.7" y2="387.6" stroke="#ff0000" stroke-width="1.1" shape-rendering="crispEdges"/>
<line x1="381.7" y1="385.3" x2="383.1" y2="382.1" stroke="#00a4ff" stroke-width="1.1" shape-rendering="crispEdges"/>
<line x1="385.0" y1="377.8" x2="389.0" y2="382.5" stroke="#00a4ff" stroke-width="1.1" shape-rendering="crispEdges"/>
<rect x="311.5" y="391.6" width="2.4" height="1" fill="#ff0000" shape-rendering="crispEdges"/>
<rect x="318.9" y="377.1" width="2.6" height="1" fill="#00a4ff" shape-rendering="crispEdges"/>
<polygon points="324.2,388.9 328.8,388.9 326.6,392.7 324.2,392.7" fill="#ff0000" shape-rendering="crispEdges"/>
<polygon points="330.0,380.2 331.4,377.1 335.0,377.1 334.0,380.2" fill="#00a4ff" shape-rendering="crispEdges"/>
<rect x="337.6" y="391.6" width="2.4" height="1" fill="#ff0000" shape-rendering="crispEdges"/>
<rect x="344.4" y="377.1" width="2.6" height="1" fill="#00a4ff" shape-rendering="crispEdges"/>
<rect x="351.4" y="391.6" width="2.4" height="1" fill="#ff0000" shape-rendering="crispEdges"/>
<polygon points="356.4,380.2 358.8,377.1 362.4,377.1 360.4,380.2" fill="#00a4ff" shape-rendering="crispEdges"/>
<polygon points="363.1,388.9 367.7,388.9 366.5,392.7 364.1,392.7" fill="#ff0000" shape-rendering="crispEdges"/>
<polygon points="369.5,380.2 369.9,377.1 373.5,377.1 373.5,380.2" fill="#00a4ff" shape-rendering="crispEdges"/>
<polygon points="375.6,388.9 380.2,388.9 380.0,392.7 377.6,392.7" fill="#ff0000" shape-rendering="crispEdges"/>
<polygon points="382.6,380.2 384.0,377.1 387.6,377.1 386.6,380.2" fill="#00a4ff" shape-rendering="crispEdges"/>
<line x1="208.0" y1="411.5" x2="209.8" y2="408.1" stroke="#ff9000" stroke-width="1.1" shape-rendering="crispEdges"/>
<line x1="211.2" y1="405.7" x2="213.1" y2="402.2" stroke="#ff9000" stroke-width="1.1" shape-rendering="crispEdges"/>
<line x1="219.1" y1="402.4" x2="220.4" y2="405.7" stroke="#ff9000" stroke-width="1.1" shape-rendering="crispEdges"/>
<line x1="225.1" y1="404.9" x2="226.7" y2="401.7" stroke="#ff9000" stroke-width="1.1" shape-rendering="crispEdges"/>
<line x1="232.2" y1="402.0" x2="233.7" y2="405.2" stroke="#ff9000" stroke-width="1.1" shape-rendering="crispEdges"/>
<line x1="240.5" y1="401.3" x2="242.6" y2="397.0" stroke="#989898" stroke-width="1.1" shape-rendering="crispEdges"/>
<line x1="237.9" y1="406.4" x2="239.5" y2="403.2" stroke="#ff9000" stroke-width="1.1" shape-rendering="crispEdges"/>
<line x1="243.4" y1="397.0" x2="245.5" y2="401.3" stroke="#989898" stroke-width="1.1" shape-rendering="crispEdges"/>
<line x1="246.5" y1="403.2" x2="248.1" y2="406.4" stroke="#ff9000" stroke-width="1.1" shape-rendering="crispEdges"/>
<line x1="252.1" y1="405.7" x2="253.6" y2="402.5" stroke="#ff9000" stroke-width="1.1" shape-rendering="crispEdges"/>
<line x1="260.1" y1="405.2" x2="261.9" y2="409.5" stroke="#ff9000" stroke-width="1.1" shape-rendering="crispEdges"/>
<line x1="258.0" y1="400.1" x2="259.3" y2="403.3" stroke="#989898" stroke-width="1.1" shape-rendering="crispEdges"/>
<line x1="262.6" y1="409.5" x2="264.6" y2="405.2" stroke="#ff9000" stroke-width="1.1" shape-rendering="crispEdges"/>
<line x1="265.6" y1="403.3" x2="267.1" y2="400.1" stroke="#989898" stroke-width="1.1" shape-rendering="crispEdges"/>
<line x1="271.9" y1="402.0" x2="273.5" y2="405.2" stroke="#ff9000" stroke-width="1.1" shape-rendering="crispEdges"/>
<line x1="279.8" y1="401.3" x2="281.5" y2="397.0" stroke="#989898" stroke-width="1.1" shape-rendering="crispEdges"/>
<line x1="277.6" y1="406.4" x2="279.0" y2="403.2" stroke="#ff9000" stroke-width="1.1" shape-rendering="crispEdges"/>
<line x1="286.7" y1="407.4" x2="288.0" y2="410.5" stroke="#ff9000" stroke-width="1.1" shape-rendering="crispEdges"/>
<line x1="282.3" y1="397.1" x2="284.1" y2="401.3" stroke="#989898" stroke-width="1.1" shape-rendering="crispEdges"/>
<line x1="284.9" y1="403.3" x2="286.3" y2="406.6" stroke="#ff9000" stroke-width="1.1" shape-rendering="crispEdges"/>
<polygon points="214.0,398.6 216.4,395.5 220.0,395.5 218.0,398.6" fill="#989898" shape-rendering="crispEdges"/>
<polygon points="220.2,407.4 224.8,407.4 223.6,411.2 221.2,411.2" fill="#ff9000" shape-rendering="crispEdges"/>
<polygon points="227.1,398.6 229.5,395.5 233.1,395.5 231.1,398.6" fill="#989898" shape-rendering="crispEdges"/>
<polygon points="232.8,407.4 237.4,407.4 237.2,411.2 234.8,411.2" fill="#ff9000" shape-rendering="crispEdges"/>
<rect x="241.7" y="395.5" width="2.6" height="1" fill="#989898" shape-rendering="crispEdges"/>
<polygon points="248.8,407.4 253.4,407.4 251.2,411.2 248.8,411.2" fill="#ff9000" shape-rendering="crispEdges"/>
<polygon points="254.0,398.6 254.4,395.5 258.0,395.5 258.0,398.6" fill="#989898" shape-rendering="crispEdges"/>
<rect x="261.0" y="410.1" width="2.4" height="1" fill="#ff9000" shape-rendering="crispEdges"/>
<polygon points="266.6,398.6 267.0,395.5 270.6,395.5 270.6,398.6" fill="#989898" shape-rendering="crispEdges"/>
<polygon points="274.8,407.4 279.4,407.4 277.2,411.2 274.8,411.2" fill="#ff9000" shape-rendering="crispEdges"/>
<rect x="280.6" y="395.5" width="2.6" height="1" fill="#989898" shape-rendering="crispEdges"/>
<line x1="309.0" y1="410.5" x2="310.6" y2="407.4" stroke="#ff9000" stroke-width="1.1" shape-rendering="crispEdges"/>
<line x1="311.6" y1="405.5" x2="313.3" y2="402.2" stroke="#ff9000" stroke-width="1.1" shape-rendering="crispEdges"/>
<line x1="318.2" y1="400.8" x2="319.5" y2="404.1" stroke="#989898" stroke-width="1.1" shape-rendering="crispEdges"/>
<line x1="324.2" y1="405.8" x2="325.8" y2="402.6" stroke="#ff9000" stroke-width="1.1" shape-rendering="crispEdges"/>
<line x1="331.4" y1="400.9" x2="333.0" y2="404.2" stroke="#989898" stroke-width="1.1" shape-rendering="crispEdges"/>
<line x1="339.0" y1="403.8" x2="340.5" y2="400.6" stroke="#989898" stroke-width="1.1" shape-rendering="crispEdges"/>
<line x1="345.4" y1="402.4" x2="346.9" y2="405.7" stroke="#ff9000" stroke-width="1.1" shape-rendering="crispEdges"/>
<line x1="353.2" y1="401.3" x2="355.2" y2="397.0" stroke="#989898" stroke-width="1.1" shape-rendering="crispEdges"/>
<line x1="350.8" y1="406.4" x2="352.3" y2="403.2" stroke="#ff9000" stroke-width="1.1" shape-rendering="crispEdges"/>
<line x1="356.0" y1="397.0" x2="357.9" y2="401.3" stroke="#989898" stroke-width="1.1" shape-rendering="crispEdges"/>
<line x1="359.7" y1="405.2" x2="361.6" y2="409.5" stroke="#ff9000" stroke-width="1.1" shape-rendering="crispEdges"/>
<line x1="362.4" y1="409.5" x2="364.4" y2="405.2" stroke="#ff9000" stroke-width="1.1" shape-rendering="crispEdges"/>
<line x1="366.3" y1="401.3" x2="368.3" y2="397.0" stroke="#989898" stroke-width="1.1" shape-rendering="crispEdges"/>
<line x1="369.1" y1="397.0" x2="371.2" y2="401.3" stroke="#989898" stroke-width="1.1" shape-rendering="crispEdges"/>
<line x1="372.1" y1="403.2" x2="373.7" y2="406.4" stroke="#ff9000" stroke-width="1.1" shape-rendering="crispEdges"/>
<line x1="378.3" y1="404.1" x2="379.7" y2="400.9" stroke="#989898" stroke-width="1.1" shape-rendering="crispEdges"/>
<line x1="387.0" y1="407.4" x2="388.5" y2="410.5" stroke="#ff9000" stroke-width="1.1" shape-rendering="crispEdges"/>
<line x1="384.7" y1="402.4" x2="386.3" y2="405.7" stroke="#ff9000" stroke-width="1.1" shape-rendering="crispEdges"/>
<polygon points="314.0,398.6 314.4,395.5 318.0,395.5 318.0,398.6" fill="#989898" shape-rendering="crispEdges"/>
<polygon points="318.8,407.4 323.4,407.4 323.2,411.2 320.8,411.2" fill="#ff9000" shape-rendering="crispEdges"/>
<polygon points="326.6,398.6 328.0,395.5 331.6,395.5 330.6,398.6" fill="#989898" shape-rendering="crispEdges"/>
<polygon points="333.8,407.4 338.4,407.4 337.2,411.2 334.8,411.2" fill="#ff9000" shape-rendering="crispEdges"/>
<polygon points="340.2,398.6 342.6,395.5 346.2,395.5 344.2,398.6" fill="#989898" shape-rendering="crispEdges"/>
<polygon points="347.8,407.4 352.4,407.4 350.2,411.2 347.8,411.2" fill="#ff9000" shape-rendering="crispEdges"/>
<rect x="354.3" y="395.5" width="2.6" height="1" fill="#989898" shape-rendering="crispEdges"/>
<rect x="360.8" y="410.1" width="2.4" height="1" fill="#ff9000" shape-rendering="crispEdges"/>
<rect x="367.4" y="395.5" width="2.6" height="1" fill="#989898" shape-rendering="crispEdges"/>
<polygon points="373.4,407.4 378.0,407.4 376.8,411.2 374.4,411.2" fill="#ff9000" shape-rendering="crispEdges"/>
<polygon points="379.4,398.6 379.8,395.5 383.4,395.5 383.4,398.6" fill="#989898" shape-rendering="crispEdges"/>
<polyline points="210.8,500.0 212.7,496.3" fill="none" stroke="#ff0000" stroke-width="1.5"/>
<polyline points="218.3,491.7 219.6,495.0" fill="none" stroke="#00a4ff" stroke-width="1.5"/>
<polyline points="225.7,495.0 227.6,491.7" fill="none" stroke="#00a4ff" stroke-width="1.5"/>
<polyline points="233.2,496.3 235.1,500.0" fill="none" stroke="#ff0000" stroke-width="1.5"/>
<polyline points="235.1,501.0 237.9,504.5" fill="none" stroke="#ff0000" stroke-width="1.5"/>
<polyline points="243.5,491.3 245.7,494.5" fill="none" stroke="#00a4ff" stroke-width="1.5"/>
<polyline points="250.9,500.0 252.8,496.3" fill="none" stroke="#ff0000" stroke-width="1.5"/>
<polyline points="259.3,495.6 261.2,499.1" fill="none" stroke="#ff0000" stroke-width="1.5"/>
<polyline points="265.5,495.0 267.7,491.7" fill="none" stroke="#00a4ff" stroke-width="1.5"/>
<polyline points="272.4,496.3 274.3,500.0" fill="none" stroke="#ff0000" stroke-width="1.5"/>
<polyline points="277.0,500.0 278.6,496.3" fill="none" stroke="#ff0000" stroke-width="1.5"/>
<polyline points="275.2,504.5 277.0,504.5" fill="none" stroke="#ff0000" stroke-width="1.5"/>
<polyline points="283.6,491.3 286.0,495.0" fill="none" stroke="#00a4ff" stroke-width="1.5"/>
<polyline points="286.4,501.0 289.2,504.5" fill="none" stroke="#ff0000" stroke-width="1.5"/>
<polygon points="240.4,490.8 241.6,488.2 244.0,488.2 243.0,490.8" fill="#00a4ff"/>
<polygon points="279.8,490.8 281.0,488.2 283.4,488.2 282.4,490.8" fill="#00a4ff"/>
<polyline points="213.6,510.3 216.4,513.7" fill="none" stroke="#989898" stroke-width="1.4"/>
<polyline points="222.9,514.5 224.8,510.3" fill="none" stroke="#989898" stroke-width="1.4"/>
<polyline points="237.0,513.0 239.4,507.6" fill="none" stroke="#989898" stroke-width="1.4"/>
<polyline points="239.4,507.6 242.5,513.0" fill="none" stroke="#989898" stroke-width="1.4"/>
<polyline points="254.7,510.3 256.5,513.7" fill="none" stroke="#989898" stroke-width="1.4"/>
<polyline points="262.1,513.7 264.0,510.3" fill="none" stroke="#989898" stroke-width="1.4"/>
<polyline points="276.2,513.0 278.0,508.0" fill="none" stroke="#989898" stroke-width="1.4"/>
<polyline points="278.0,508.0 281.5,508.5" fill="none" stroke="#989898" stroke-width="1.4"/>
<polyline points="281.5,508.5 282.0,513.0" fill="none" stroke="#989898" stroke-width="1.4"/>
<polyline points="228.9,514.5 230.8,517.8" fill="none" stroke="#ff9000" stroke-width="1.4"/>
<polyline points="247.2,518.7 249.0,515.0" fill="none" stroke="#ff9000" stroke-width="1.4"/>
<polyline points="243.5,520.0 246.3,523.2" fill="none" stroke="#ff9000" stroke-width="1.4"/>
<polyline points="269.2,515.5 271.5,519.3" fill="none" stroke="#ff9000" stroke-width="1.4"/>
<polyline points="270.5,522.5 273.3,519.8" fill="none" stroke="#ff9000" stroke-width="1.4"/>
<polyline points="311.0,500.0 312.9,496.3" fill="none" stroke="#ff0000" stroke-width="1.5"/>
<polyline points="318.5,491.7 319.8,495.0" fill="none" stroke="#00a4ff" stroke-width="1.5"/>
<polyline points="325.9,495.0 327.8,491.7" fill="none" stroke="#00a4ff" stroke-width="1.5"/>
<polyline points="333.4,496.3 335.3,500.0" fill="none" stroke="#ff0000" stroke-width="1.5"/>
<polyline points="335.3,501.0 338.1,504.5" fill="none" stroke="#ff0000" stroke-width="1.5"/>
<polyline points="343.7,491.3 345.9,494.5" fill="none" stroke="#00a4ff" stroke-width="1.5"/>
<polyline points="351.1,500.0 353.0,496.3" fill="none" stroke="#ff0000" stroke-width="1.5"/>
<polyline points="359.5,495.6 361.4,499.1" fill="none" stroke="#ff0000" stroke-width="1.5"/>
<polyline points="365.7,495.0 367.9,491.7" fill="none" stroke="#00a4ff" stroke-width="1.5"/>
<polyline points="372.6,496.3 374.5,500.0" fill="none" stroke="#ff0000" stroke-width="1.5"/>
<polyline points="377.2,500.0 378.8,496.3" fill="none" stroke="#ff0000" stroke-width="1.5"/>
<polyline points="375.4,504.5 377.2,504.5" fill="none" stroke="#ff0000" stroke-width="1.5"/>
<polyline points="383.8,491.3 386.2,495.0" fill="none" stroke="#00a4ff" stroke-width="1.5"/>
<polyline points="386.6,501.0 389.4,504.5" fill="none" stroke="#ff0000" stroke-width="1.5"/>
<polygon points="340.6,490.8 341.8,488.2 344.2,488.2 343.2,490.8" fill="#00a4ff"/>
<polygon points="380.0,490.8 381.2,488.2 383.6,488.2 382.6,490.8" fill="#00a4ff"/>
<polyline points="313.8,510.3 316.6,513.7" fill="none" stroke="#989898" stroke-width="1.4"/>
<polyline points="323.1,514.5 325.0,510.3" fill="none" stroke="#989898" stroke-width="1.4"/>
<polyline points="337.2,513.0 339.6,507.6" fill="none" stroke="#989898" stroke-width="1.4"/>
<polyline points="339.6,507.6 342.7,513.0" fill="none" stroke="#989898" stroke-width="1.4"/>
<polyline points="354.9,510.3 356.7,513.7" fill="none" stroke="#989898" stroke-width="1.4"/>
<polyline points="362.3,513.7 364.2,510.3" fill="none" stroke="#989898" stroke-width="1.4"/>
<polyline points="376.4,513.0 378.2,508.0" fill="none" stroke="#989898" stroke-width="1.4"/>
<polyline points="378.2,508.0 381.7,508.5" fill="none" stroke="#989898" stroke-width="1.4"/>
<polyline points="381.7,508.5 382.2,513.0" fill="none" stroke="#989898" stroke-width="1.4"/>
<polyline points="329.1,514.5 331.0,517.8" fill="none" stroke="#ff9000" stroke-width="1.4"/>
<polyline points="347.4,518.7 349.2,515.0" fill="none" stroke="#ff9000" stroke-width="1.4"/>
<polyline points="343.7,520.0 346.5,523.2" fill="none" stroke="#ff9000" stroke-width="1.4"/>
<polyline points="369.4,515.5 371.7,519.3" fill="none" stroke="#ff9000" stroke-width="1.4"/>
<polyline points="370.7,522.5 373.5,519.8" fill="none" stroke="#ff9000" stroke-width="1.4"/>
<defs><filter id="th" x="0" y="0" width="750" height="700" filterUnits="userSpaceOnUse" color-interpolation-filters="sRGB"><feComponentTransfer><feFuncA type="discrete" tableValues="0 0 1 1 1"/></feComponentTransfer></filter></defs>
<g filter="url(#th)">
<text x="295.70" y="20.5" font-size="15" fill="#ffffff" stroke="#ffffff" stroke-width="0.8" textLength="159.77" lengthAdjust="spacingAndGlyphs">INCA H TOF Channels</text>
<text x="219.00" y="37.6" font-size="11" fill="#ffffff" stroke="#ffffff" stroke-width="0.7" textLength="312.98" lengthAdjust="spacingAndGlyphs">2004-332T00:00:00.000 - 2004-332T23:59:00.000 MIMI/APL</text>
<text x="33.00" y="76.6" font-size="12.2" fill="#ffffff" stroke="#ffffff" stroke-width="0.7" textLength="37.98" lengthAdjust="spacingAndGlyphs">10.000</text>
<text x="39.80" y="124.8" font-size="12.2" fill="#ffffff" stroke="#ffffff" stroke-width="0.7" textLength="31.17" lengthAdjust="spacingAndGlyphs">1.000</text>
<text x="38.60" y="171.4" font-size="12.2" fill="#ffffff" stroke="#ffffff" stroke-width="0.7" textLength="32.37" lengthAdjust="spacingAndGlyphs">0.100</text>
<text x="38.60" y="218.4" font-size="12.2" fill="#ffffff" stroke="#ffffff" stroke-width="0.7" textLength="32.37" lengthAdjust="spacingAndGlyphs">0.010</text>
<text x="38.60" y="259.2" font-size="12.2" fill="#ffffff" stroke="#ffffff" stroke-width="0.7" textLength="32.37" lengthAdjust="spacingAndGlyphs">0.001</text>
<text x="21.3" y="182.60" font-size="12.6" fill="#ffffff" stroke="#ffffff" stroke-width="0.3" transform="rotate(-90 21.3 182.60)" textLength="54.27" lengthAdjust="spacingAndGlyphs" font-weight="bold">Log Cnts</text>
<text x="36.9" y="199.7" font-size="11.3" fill="#fff" stroke="#fff" stroke-width="0.5" transform="rotate(-90 36.9 199.7)" textLength="82.3" lengthAdjust="spacingAndGlyphs">(cm<tspan dy="-6.5" font-size="5.5" stroke-width="0.3">2</tspan><tspan dy="6.5">-sr-s-keV)</tspan><tspan dy="-6.5" font-size="5.5" stroke-width="0.3">-1</tspan></text>
<text x="38.9" y="335.00" font-size="12" fill="#ffffff" stroke="#ffffff" stroke-width="0.7" transform="rotate(-90 38.9 335.00)" textLength="54.28" lengthAdjust="spacingAndGlyphs">INCA Mode</text>
<text x="39.2" y="493.30" font-size="14.4" fill="#ffffff" stroke="#ffffff" stroke-width="0.7" transform="rotate(-90 39.2 493.30)" textLength="88.57" lengthAdjust="spacingAndGlyphs">Cassini Attitude</text>
<rect x="620" y="64" width="5" height="1" fill="#ffffff" shape-rendering="crispEdges"/>
<text x="627.25" y="65" font-size="12.3" fill="#ffffff" stroke="#ffffff" stroke-width="0.25" font-weight="bold" font-style="italic" textLength="72.62" lengthAdjust="spacingAndGlyphs">227-360 keV</text>
<rect x="620" y="78" width="5" height="1" fill="#ff9000" shape-rendering="crispEdges"/>
<text x="628.20" y="78" font-size="12.3" fill="#ff9000" stroke="#ff9000" stroke-width="0.25" font-weight="bold" font-style="italic" textLength="71.69" lengthAdjust="spacingAndGlyphs">149-227 keV</text>
<rect x="620" y="91" width="5" height="1" fill="#ff0000" shape-rendering="crispEdges"/>
<text x="627.40" y="91" font-size="12.3" fill="#ff0000" stroke="#ff0000" stroke-width="0.25" font-weight="bold" font-style="italic" textLength="65.27" lengthAdjust="spacingAndGlyphs">90-149 keV</text>
<rect x="620" y="104" width="5" height="1" fill="#00ff00" shape-rendering="crispEdges"/>
<text x="627.00" y="104" font-size="12.3" fill="#00ff00" stroke="#00ff00" stroke-width="0.25" font-weight="bold" font-style="italic" textLength="58.25" lengthAdjust="spacingAndGlyphs">55-90 keV</text>
<rect x="620" y="117" width="5" height="1" fill="#ff00ff" shape-rendering="crispEdges"/>
<text x="627.00" y="117" font-size="12.3" fill="#ff00ff" stroke="#ff00ff" stroke-width="0.25" font-weight="bold" font-style="italic" textLength="58.25" lengthAdjust="spacingAndGlyphs">35-55 keV</text>
<rect x="620" y="130" width="5" height="1" fill="#7480fc" shape-rendering="crispEdges"/>
<text x="627.25" y="130" font-size="12.3" fill="#7480fc" stroke="#7480fc" stroke-width="0.25" font-weight="bold" font-style="italic" textLength="58.00" lengthAdjust="spacingAndGlyphs">24-35 keV</text>
<rect x="620" y="143" width="5" height="1" fill="#999999" shape-rendering="crispEdges"/>
<text x="628.20" y="143" font-size="12.3" fill="#999999" stroke="#999999" stroke-width="0.25" font-weight="bold" font-style="italic" textLength="57.07" lengthAdjust="spacingAndGlyphs">13-24 keV</text>
<rect x="620" y="156" width="5" height="1" fill="#00a4ff" shape-rendering="crispEdges"/>
<text x="627.00" y="156" font-size="12.3" fill="#00a4ff" stroke="#00a4ff" stroke-width="0.25" font-weight="bold" font-style="italic" textLength="51.10" lengthAdjust="spacingAndGlyphs">5-13 keV</text>
<text x="628.10" y="277.4" font-size="10" fill="#4cb000" stroke="#4cb000" stroke-width="0.7" textLength="24.00" lengthAdjust="spacingAndGlyphs">InCal</text>
<text x="628.10" y="292.7" font-size="10" fill="#ff0000" stroke="#ff0000" stroke-width="0.7" textLength="82.73" lengthAdjust="spacingAndGlyphs">OutCal:UnPlaned</text>
<text x="628.10" y="308.2" font-size="10" fill="#7480fc" stroke="#7480fc" stroke-width="0.7" textLength="68.99" lengthAdjust="spacingAndGlyphs">OutCal:Planed</text>
<text x="628.10" y="320.7" font-size="10" fill="#989898" stroke="#989898" stroke-width="0.7" textLength="47.01" lengthAdjust="spacingAndGlyphs">NeuMode</text>
<text x="628.10" y="335.6" font-size="10" fill="#00ff00" stroke="#00ff00" stroke-width="0.7" textLength="42.02" lengthAdjust="spacingAndGlyphs">IonMode</text>
<text x="628.10" y="351.1" font-size="10" fill="#ff00ff" stroke="#ff00ff" stroke-width="0.7" textLength="48.18" lengthAdjust="spacingAndGlyphs">IonMode2</text>
<text x="627.90" y="368.7" font-size="12.4" fill="#ffffff" stroke="#ffffff" stroke-width="0.7" textLength="62.02" lengthAdjust="spacingAndGlyphs">Spin/P_CK</text>
<text x="628.40" y="387.2" font-size="12.4" fill="#ffffff" stroke="#ffffff" stroke-width="0.7" textLength="65.62" lengthAdjust="spacingAndGlyphs">-X_toSaturn</text>
<text x="628.40" y="405.7" font-size="12.4" fill="#ffffff" stroke="#ffffff" stroke-width="0.7" textLength="65.62" lengthAdjust="spacingAndGlyphs">-Y_toSaturn</text>
<text x="628.40" y="424.2" font-size="12.4" fill="#ffffff" stroke="#ffffff" stroke-width="0.7" textLength="65.61" lengthAdjust="spacingAndGlyphs">-Z_toSaturn</text>
<text x="628.40" y="442.7" font-size="12.4" fill="#ffffff" stroke="#ffffff" stroke-width="0.7" textLength="51.30" lengthAdjust="spacingAndGlyphs">-X_toSun</text>
<text x="628.40" y="461.2" font-size="12.4" fill="#ffffff" stroke="#ffffff" stroke-width="0.7" textLength="51.30" lengthAdjust="spacingAndGlyphs">-Y_toSun</text>
<text x="628.40" y="479.7" font-size="12.4" fill="#ffffff" stroke="#ffffff" stroke-width="0.7" textLength="51.28" lengthAdjust="spacingAndGlyphs">-Z_toSun</text>
<text x="628.40" y="498.2" font-size="12.4" fill="#ffffff" stroke="#ffffff" stroke-width="0.7" textLength="54.12" lengthAdjust="spacingAndGlyphs">-X_toNEP</text>
<text x="628.40" y="516.7" font-size="12.4" fill="#ffffff" stroke="#ffffff" stroke-width="0.7" textLength="54.12" lengthAdjust="spacingAndGlyphs">-Y_toNEP</text>
<text x="628.40" y="535.2" font-size="12.4" fill="#ffffff" stroke="#ffffff" stroke-width="0.7" textLength="54.10" lengthAdjust="spacingAndGlyphs">-Z_toNEP</text>
<text x="52.60" y="377" font-size="10.4" fill="#ffffff" stroke="#ffffff" stroke-width="0.5" textLength="19.39" lengthAdjust="spacingAndGlyphs">180°</text>
<text x="57.00" y="396" font-size="10.4" fill="#ffffff" stroke="#ffffff" stroke-width="0.5" textLength="9.01" lengthAdjust="spacingAndGlyphs">0°</text>
<text x="52.60" y="525.8" font-size="10.4" fill="#ffffff" stroke="#ffffff" stroke-width="0.5" textLength="19.39" lengthAdjust="spacingAndGlyphs">100°</text>
<text x="57.00" y="544.9" font-size="10.4" fill="#ffffff" stroke="#ffffff" stroke-width="0.5" textLength="9.51" lengthAdjust="spacingAndGlyphs">0°</text>
<text x="59.05" y="565.4" font-size="11.4" fill="#ffffff" stroke="#ffffff" stroke-width="0.7" textLength="32.67" lengthAdjust="spacingAndGlyphs">00:00</text>
<text x="195.25" y="565.4" font-size="11.4" fill="#ffffff" stroke="#ffffff" stroke-width="0.7" textLength="32.67" lengthAdjust="spacingAndGlyphs">06:00</text>
<text x="331.45" y="565.4" font-size="11.4" fill="#ffffff" stroke="#ffffff" stroke-width="0.7" textLength="32.67" lengthAdjust="spacingAndGlyphs">12:00</text>
<text x="467.55" y="565.4" font-size="11.4" fill="#ffffff" stroke="#ffffff" stroke-width="0.7" textLength="32.67" lengthAdjust="spacingAndGlyphs">18:00</text>
<text x="59.90" y="596.6" font-size="11.4" fill="#ffffff" stroke="#ffffff" stroke-width="0.7" textLength="30.97" lengthAdjust="spacingAndGlyphs">75.28</text>
<text x="196.10" y="596.6" font-size="11.4" fill="#ffffff" stroke="#ffffff" stroke-width="0.7" textLength="30.97" lengthAdjust="spacingAndGlyphs">74.99</text>
<text x="332.30" y="596.6" font-size="11.4" fill="#ffffff" stroke="#ffffff" stroke-width="0.7" textLength="30.97" lengthAdjust="spacingAndGlyphs">74.71</text>
<text x="468.40" y="596.6" font-size="11.4" fill="#ffffff" stroke="#ffffff" stroke-width="0.7" textLength="30.97" lengthAdjust="spacingAndGlyphs">74.42</text>
<text x="58.10" y="612.6" font-size="11.4" fill="#ffffff" stroke="#ffffff" stroke-width="0.7" textLength="34.62" lengthAdjust="spacingAndGlyphs">-11.12</text>
<text x="194.30" y="612.6" font-size="11.4" fill="#ffffff" stroke="#ffffff" stroke-width="0.7" textLength="34.62" lengthAdjust="spacingAndGlyphs">-11.08</text>
<text x="330.50" y="612.6" font-size="11.4" fill="#ffffff" stroke="#ffffff" stroke-width="0.7" textLength="34.62" lengthAdjust="spacingAndGlyphs">-11.03</text>
<text x="466.60" y="612.6" font-size="11.4" fill="#ffffff" stroke="#ffffff" stroke-width="0.7" textLength="34.61" lengthAdjust="spacingAndGlyphs">-10.99</text>
<text x="61.65" y="627.5" font-size="11.4" fill="#ffffff" stroke="#ffffff" stroke-width="0.7" textLength="27.50" lengthAdjust="spacingAndGlyphs">0701</text>
<text x="197.85" y="627.5" font-size="11.4" fill="#ffffff" stroke="#ffffff" stroke-width="0.7" textLength="27.50" lengthAdjust="spacingAndGlyphs">0702</text>
<text x="334.05" y="627.5" font-size="11.4" fill="#ffffff" stroke="#ffffff" stroke-width="0.7" textLength="27.50" lengthAdjust="spacingAndGlyphs">0703</text>
<text x="470.15" y="627.5" font-size="11.4" fill="#ffffff" stroke="#ffffff" stroke-width="0.7" textLength="27.50" lengthAdjust="spacingAndGlyphs">0704</text>
<text x="59.90" y="659.4" font-size="11.4" fill="#ffffff" stroke="#ffffff" stroke-width="0.7" textLength="30.97" lengthAdjust="spacingAndGlyphs">80.54</text>
<text x="192.30" y="659.4" font-size="11.4" fill="#ffffff" stroke="#ffffff" stroke-width="0.7" textLength="38.58" lengthAdjust="spacingAndGlyphs">240.48</text>
<text x="332.30" y="659.4" font-size="11.4" fill="#ffffff" stroke="#ffffff" stroke-width="0.7" textLength="30.97" lengthAdjust="spacingAndGlyphs">40.42</text>
<text x="464.60" y="659.4" font-size="11.4" fill="#ffffff" stroke="#ffffff" stroke-width="0.7" textLength="38.58" lengthAdjust="spacingAndGlyphs">200.37</text>
<text x="8.10" y="573.5" font-size="11.4" fill="#ffffff" stroke="#ffffff" stroke-width="0.7" textLength="25.00" lengthAdjust="spacingAndGlyphs">UTC</text>
<text x="8.10" y="604.5" font-size="11.4" fill="#ffffff" stroke="#ffffff" stroke-width="0.7" textLength="8.22" lengthAdjust="spacingAndGlyphs">R</text>
<text x="16.60" y="613.4" font-size="11.4" fill="#ffffff" stroke="#ffffff" stroke-width="0.7" textLength="27.98" lengthAdjust="spacingAndGlyphs">satur</text>
<text x="8.10" y="620.3" font-size="11.4" fill="#ffffff" stroke="#ffffff" stroke-width="0.7" textLength="17.60" lengthAdjust="spacingAndGlyphs">Lat</text>
<text x="8.10" y="635.2" font-size="11.4" fill="#ffffff" stroke="#ffffff" stroke-width="0.7" textLength="14.17" lengthAdjust="spacingAndGlyphs">LT</text>
<text x="8.10" y="651.5" font-size="11.4" fill="#ffffff" stroke="#ffffff" stroke-width="0.7" textLength="6.51" lengthAdjust="spacingAndGlyphs">L</text>
<text x="15.10" y="660.2" font-size="11.4" fill="#ffffff" stroke="#ffffff" stroke-width="0.7" textLength="34.99" lengthAdjust="spacingAndGlyphs">saturn</text>
<text x="319.00" y="687.5" font-size="10" fill="#ffffff" stroke="#ffffff" stroke-width="0.7" textLength="112.52" lengthAdjust="spacingAndGlyphs">Background Subtracted</text>
<text x="569.00" y="687.5" font-size="10" fill="#ffffff" stroke="#ffffff" stroke-width="0.7" textLength="66.01" lengthAdjust="spacingAndGlyphs">in Stare Mode</text>
</g>
</svg></body></html>
